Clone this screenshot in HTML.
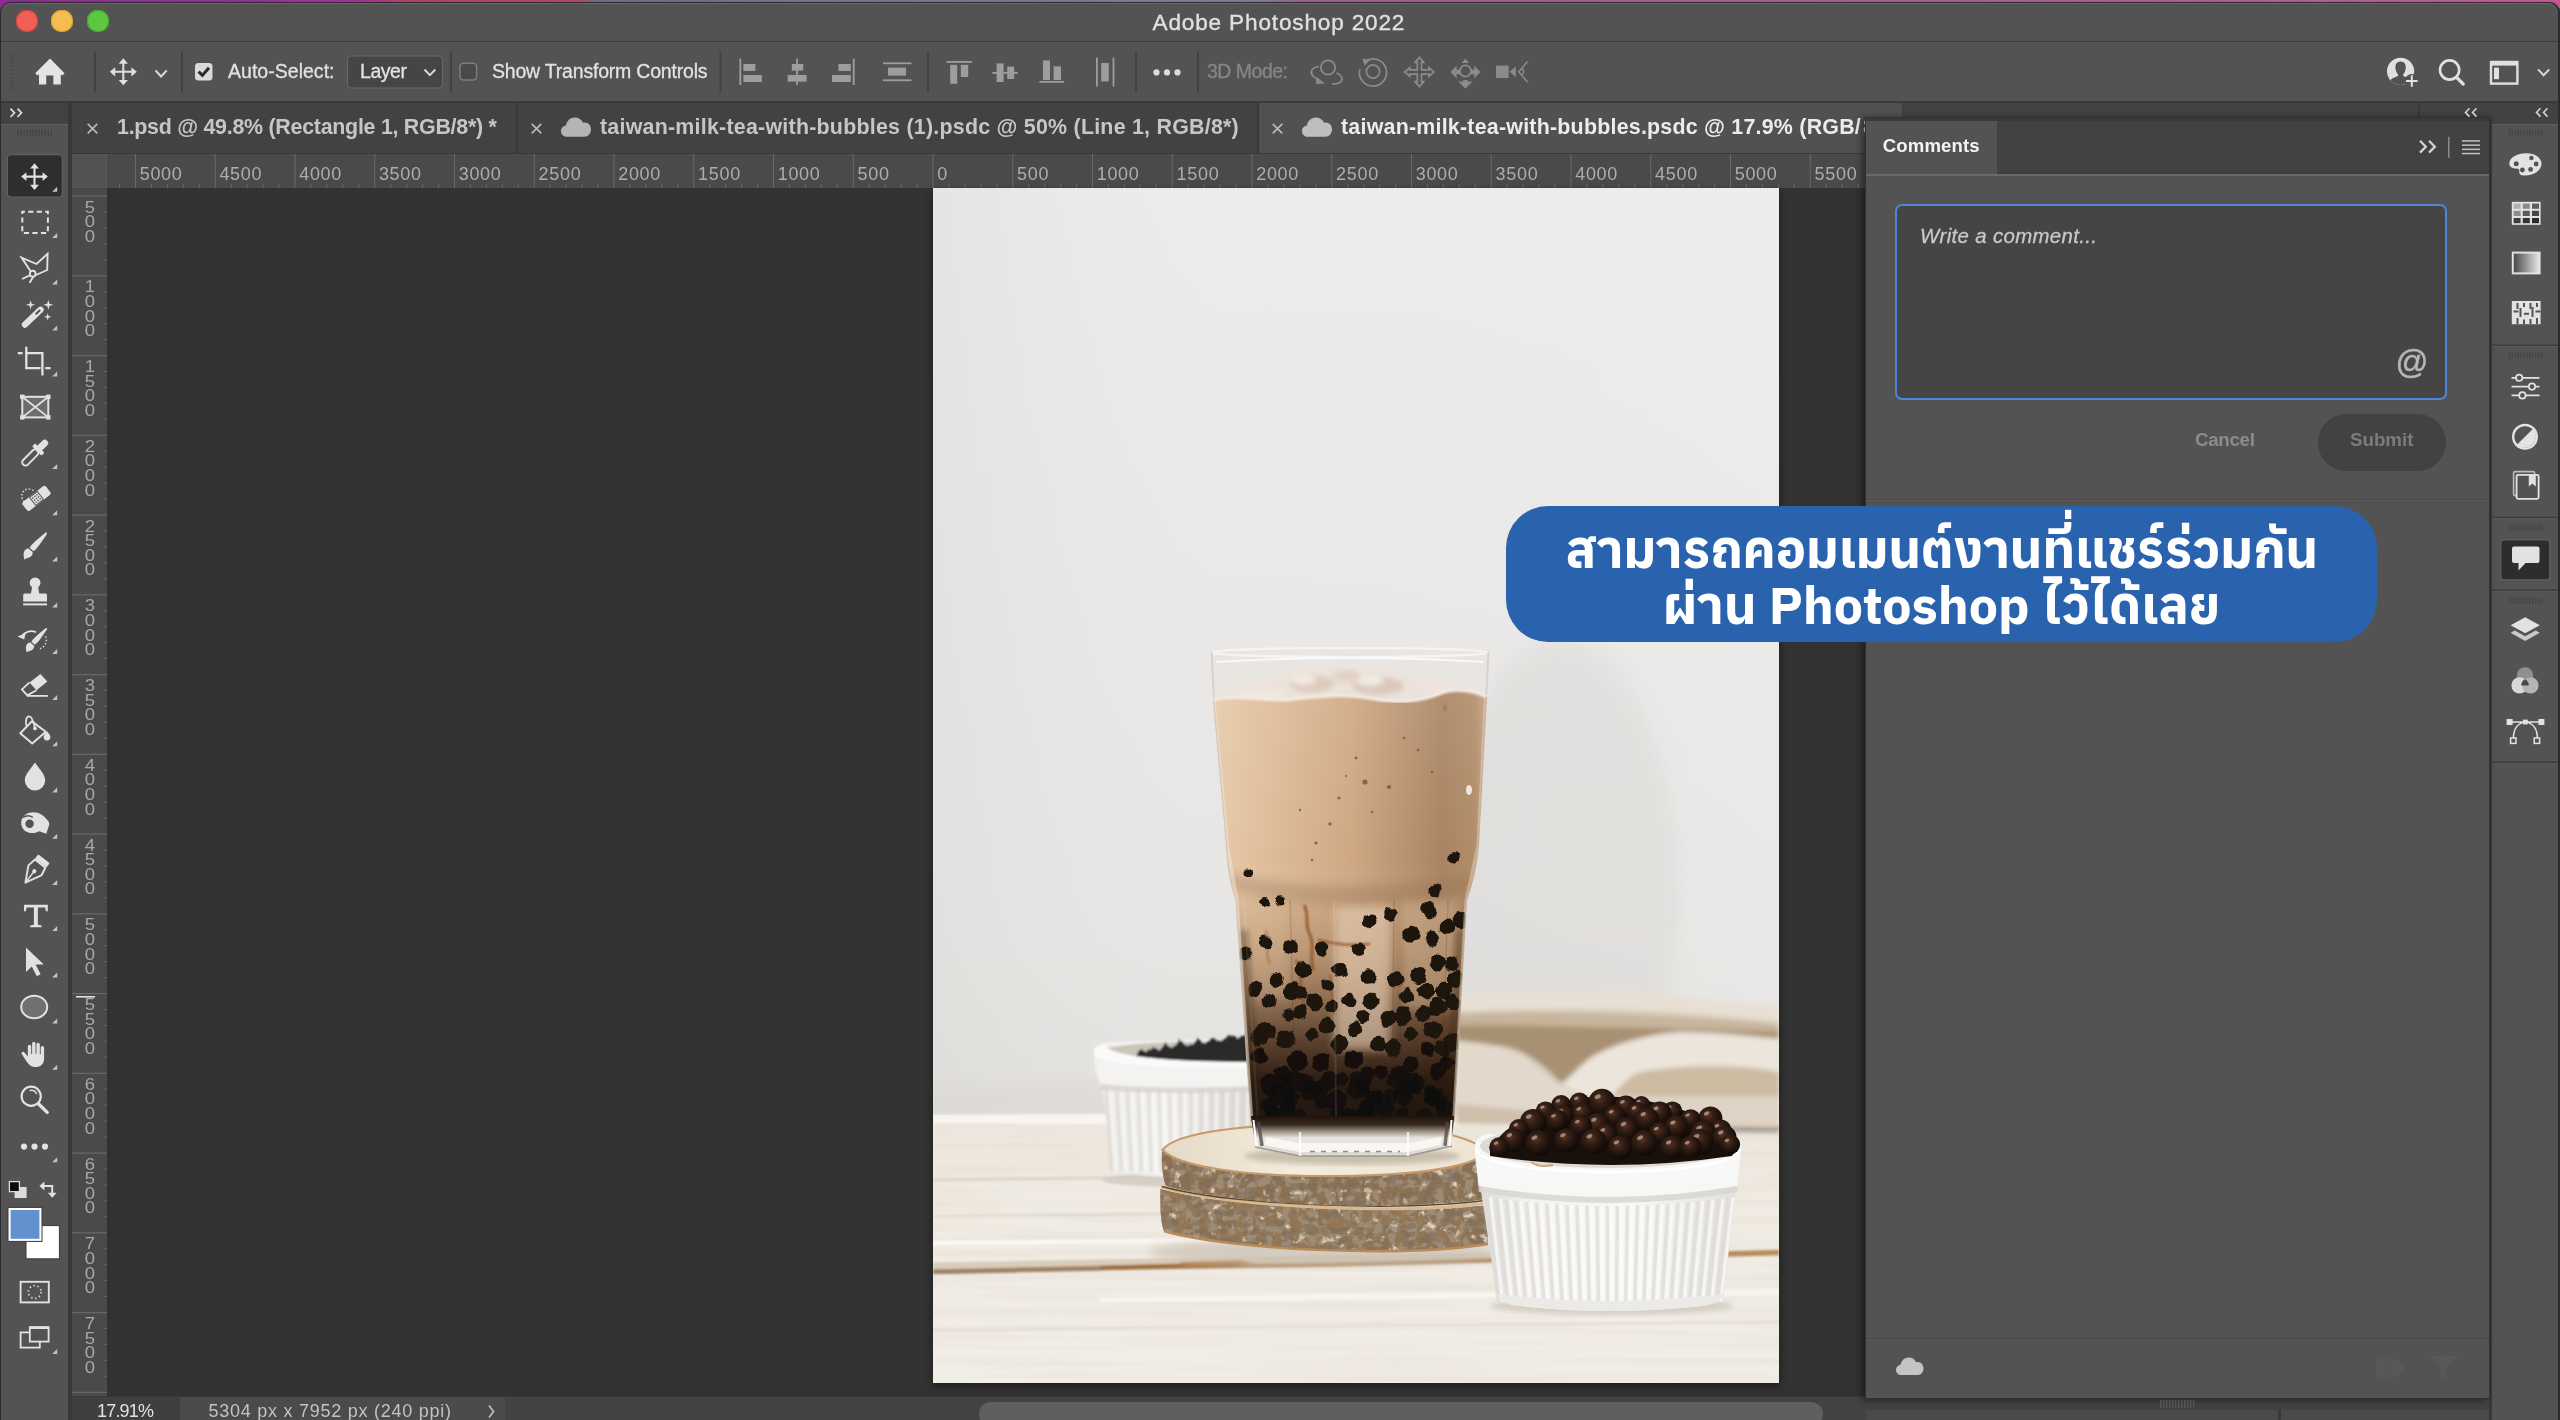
<!DOCTYPE html><html lang="th"><head><meta charset="utf-8"><title>Adobe Photoshop 2022</title><style>
*{box-sizing:border-box;margin:0;padding:0}
html,body{width:2560px;height:1420px;overflow:hidden;background:#535353}
body{position:relative;font-family:"Liberation Sans",sans-serif;color:#d6d6d6}
.a{position:absolute}
.t{position:absolute;white-space:nowrap;line-height:1}
svg{position:absolute;overflow:visible}
</style></head><body><div id="app" style="position:absolute;left:0;top:0;width:2560px;height:1420px;will-change:transform">
<div class="a" style="left:0px;top:0px;width:2560px;height:8px;background:linear-gradient(90deg,#8a2a92 0%,#a0309a 14%,#b8405e 16%,#b04a60 22.500%,#6c6c84 23.500%,#7c7c98 49%,#9a5c88 51%,#a8608c 80%,#c0568e 100%);"></div>
<div class="a" style="left:0px;top:1.5px;width:2560px;height:1419px;background:#2b2b2b;border-radius:11px 11px 0 0"></div>
<div class="a" style="left:1px;top:2.5px;width:2557px;height:39px;background:#535353;border-radius:10px 10px 0 0;box-shadow:inset 0 1px 0 #6a6a6a"></div>
<div class="a" style="left:1px;top:41px;width:2557px;height:1px;background:#3b3b3b;"></div>
<div class="a" style="left:1px;top:42px;width:2557px;height:59px;background:#535353;"></div>
<div class="a" style="left:1px;top:101px;width:2557px;height:2px;background:#3a3a3a;"></div>
<div class="a" style="left:16.4px;top:10.4px;width:21.2px;height:21.2px;border-radius:50%;background:#ee5f57;box-shadow:inset 0 0 0 1px #d0463f"></div>
<div class="a" style="left:51.4px;top:10.4px;width:21.2px;height:21.2px;border-radius:50%;background:#f5bd4f;box-shadow:inset 0 0 0 1px #d8a035"></div>
<div class="a" style="left:87.4px;top:10.4px;width:21.2px;height:21.2px;border-radius:50%;background:#5cc840;box-shadow:inset 0 0 0 1px #46a82e"></div>
<div class="t" style="left:1152.50px;top:12.37px;font-size:22.6px;color:#e0e0e0;letter-spacing:0.829px;-webkit-text-stroke:0.35px #e0e0e0;">Adobe Photoshop 2022</div>
<svg class="a" style="left:0;top:0" width="2560" height="1420" viewBox="0 0 2560 1420"><rect x="10" y="55.0" width="4" height="1.6" fill="#4a4a4a"/><rect x="10" y="58.6" width="4" height="1.6" fill="#4a4a4a"/><rect x="10" y="62.2" width="4" height="1.6" fill="#4a4a4a"/><rect x="10" y="65.8" width="4" height="1.6" fill="#4a4a4a"/><rect x="10" y="69.4" width="4" height="1.6" fill="#4a4a4a"/><rect x="10" y="73.0" width="4" height="1.6" fill="#4a4a4a"/><rect x="10" y="76.6" width="4" height="1.6" fill="#4a4a4a"/><rect x="10" y="80.2" width="4" height="1.6" fill="#4a4a4a"/><rect x="10" y="83.8" width="4" height="1.6" fill="#4a4a4a"/><rect x="10" y="87.4" width="4" height="1.6" fill="#4a4a4a"/><path fill="#e4e4e4" d="M50 58.5 L64.6 73.2 L62.2 75.6 L60.8 74.2 L60.8 84.6 L53.3 84.6 L53.3 75.4 L46.2 75.4 L46.2 84.6 L39 84.6 L39 74.2 L37.6 75.6 L35.2 73.2 Z"/><rect x="94" y="52" width="2" height="40" fill="#424242"/><rect x="181" y="52" width="2" height="40" fill="#424242"/><rect x="450" y="52" width="2" height="40" fill="#424242"/><rect x="719.5" y="52" width="2" height="40" fill="#424242"/><rect x="927" y="52" width="2" height="40" fill="#424242"/><rect x="1135" y="52" width="2" height="40" fill="#424242"/><rect x="1197" y="52" width="2" height="40" fill="#424242"/><path d="M112.8 71.8H133.8M123.3 61.3V82.3" stroke="#e0e0e0" stroke-width="2" fill="none"/><path fill="#e0e0e0" d="M123.3 58.3l4.6 5.3999999999999995h-9.2zM123.3 85.3l4.6 -5.3999999999999995h-9.2zM109.8 71.8l5.3999999999999995 -4.6v9.2zM136.8 71.8l-5.3999999999999995 -4.6v9.2z"/><path d="M155.5 70.5l5.6 6 5.6-6" stroke="#d8d8d8" stroke-width="2" fill="none"/><rect x="195" y="63" width="17.5" height="17.5" rx="3.5" fill="#dadada"/><path d="M198.6 71.6l3.8 3.8 6.6-7.6" stroke="#2a2a2a" stroke-width="3" fill="none"/><rect x="347.5" y="56" width="95" height="32" rx="4" fill="#454545" stroke="#686868" stroke-width="1.2"/><path d="M424.5 69.5l5.4 5.6 5.4-5.6" stroke="#d8d8d8" stroke-width="2" fill="none"/><rect x="460" y="63.3" width="16.6" height="16.6" rx="3.5" fill="#4a4a4a" stroke="#7d7d7d" stroke-width="1.5"/><g fill="#9d9d9d"><rect x="739.4" y="58.6" width="1.8" height="26.4"/><rect x="743.4" y="64" width="12" height="7"/><rect x="743.4" y="75" width="18.4" height="7"/><rect x="796.2" y="58.6" width="1.8" height="26.4"/><rect x="791.8" y="64" width="11.4" height="6.6"/><rect x="787.6" y="75" width="19" height="6.6"/><rect x="852.8" y="58.6" width="1.8" height="26.4"/><rect x="838.4" y="64" width="12.4" height="7"/><rect x="832" y="75" width="18.8" height="7"/><rect x="883" y="62.4" width="28.5" height="1.8"/><rect x="883" y="79.4" width="28.5" height="1.8"/><rect x="888" y="67.6" width="18" height="8"/><rect x="946.5" y="61" width="25.4" height="1.8"/><rect x="950.2" y="64.8" width="7" height="19"/><rect x="960.8" y="64.8" width="7.4" height="12.2"/><rect x="992.4" y="72" width="25.4" height="1.8"/><rect x="996.6" y="63.4" width="7" height="18.6"/><rect x="1007.2" y="66.6" width="7" height="12.4"/><rect x="1039.4" y="81" width="24.8" height="1.8"/><rect x="1043" y="60.4" width="7" height="19.6"/><rect x="1053.6" y="66.4" width="7.4" height="13.6"/><rect x="1096" y="57.6" width="1.8" height="29"/><rect x="1112.6" y="57.6" width="1.8" height="29"/><rect x="1101.2" y="63" width="7.6" height="18.4"/></g><circle cx="1156.5" cy="72.4" r="3.1" fill="#dcdcdc"/><circle cx="1167" cy="72.4" r="3.1" fill="#dcdcdc"/><circle cx="1177.5" cy="72.4" r="3.1" fill="#dcdcdc"/><g stroke="#8b8b8b" stroke-width="1.7" fill="none"><circle cx="1328" cy="67.5" r="7.2"/><path d="M1319 66.5c-7 1-9.5 5-6.5 9 1.5 2 4 3.6 7 4.6M1336.5 73c5 2 7 5.5 4.5 8.5-1.6 1.8-5 2.6-9 2.4"/><path d="M1316.5 77l8.5 6.6-9 .4z" fill="#8b8b8b" stroke="none"/><circle cx="1373" cy="71.5" r="6.6"/><path d="M1365 61.5a13.6 13.6 0 1 1-5.2 7.6"/><path d="M1362.5 58.5l7.6 1.6-5.6 5.6z" fill="#8b8b8b" stroke="none"/><path d="M1421.5 69.9L1421.5 62.4L1423.7 62.4L1419.4 57.4L1415.1 62.4L1417.3 62.4L1417.3 69.9L1417.3 69.9L1409.8 69.9L1409.8 67.7L1404.8 72.0L1409.8 76.3L1409.8 74.1L1417.3 74.1L1417.3 74.1L1417.3 81.6L1415.1 81.6L1419.4 86.6L1423.7 81.6L1421.5 81.6L1421.5 74.1L1421.5 74.1L1429.0 74.1L1429.0 76.3L1434.0 72.0L1429.0 67.7L1429.0 69.9L1421.5 69.9Z"/></g><g fill="#8b8b8b"><path d="M1465.4 58.5l3.6 4.4h-7.2z"/><path d="M1463.2 80h4.4v1.4h4.8l-7 7.4-7-7.4h4.8z"/><path d="M1450.4 72l6.2-6.2v4h3.6v4.4h-3.6v4z"/><path d="M1480.4 72l-6.2-6.2v4h-3.6v4.4h3.6v4z"/><circle cx="1465.4" cy="71" r="5.6" fill="none" stroke="#8b8b8b" stroke-width="1.7"/><rect x="1496" y="65.6" width="12.6" height="12.4"/><path d="M1509.6 71.8l6.2-5.4v10.8z"/><path d="M1527.6 61.4l-8.8 10.4 8.8 10.4M1521.5 68.5c3 1.6 3 5 0 6.6" fill="none" stroke="#8b8b8b" stroke-width="1.5"/></g><circle cx="2400.6" cy="71.3" r="13.6" fill="#e0e0e0"/><path d="M2400.6 61.5c3.6 0 5.4 2.8 5.2 6.2-.2 3-1.4 5.2-2.6 6.6v1.6c3.4 1.2 6.6 2.4 7.6 4.4a13.6 13.6 0 0 1-20.4 0c1-2 4.2-3.2 7.6-4.4v-1.6c-1.2-1.4-2.4-3.6-2.6-6.6-.2-3.4 1.6-6.2 5.2-6.200z" fill="#535353"/><circle cx="2411.8" cy="81" r="7" fill="#535353"/><path d="M2406 81h11.6M2411.8 75.2v11.6" stroke="#e0e0e0" stroke-width="2" fill="none"/><circle cx="2449.6" cy="70" r="9.6" fill="none" stroke="#e0e0e0" stroke-width="2.6"/><path d="M2456.6 77.4l6.6 6.6" stroke="#e0e0e0" stroke-width="3.2" stroke-linecap="round"/><rect x="2491" y="62" width="26.4" height="21.6" fill="none" stroke="#e0e0e0" stroke-width="2.4"/><rect x="2491" y="62" width="26.4" height="3.6" fill="#e0e0e0"/><rect x="2494" y="67.6" width="5" height="11.6" fill="#e0e0e0"/><path d="M2538 69.4l5.6 5.8 5.6-5.800" stroke="#d8d8d8" stroke-width="2" fill="none"/></svg>
<div class="t" style="left:228.00px;top:62.09px;font-size:19.5px;color:#e2e2e2;letter-spacing:0.025px;-webkit-text-stroke:0.3px #e2e2e2;">Auto-Select:</div>
<div class="t" style="left:360.00px;top:62.09px;font-size:19.5px;color:#e2e2e2;letter-spacing:-0.445px;-webkit-text-stroke:0.3px #e2e2e2;">Layer</div>
<div class="t" style="left:492.00px;top:62.09px;font-size:19.5px;color:#e2e2e2;letter-spacing:-0.204px;-webkit-text-stroke:0.3px #e2e2e2;">Show Transform Controls</div>
<div class="t" style="left:1207.00px;top:62.09px;font-size:19.5px;color:#868686;letter-spacing:-0.506px;-webkit-text-stroke:0.3px #868686;">3D Mode:</div>
<div class="a" style="left:1px;top:103px;width:67px;height:21px;background:#424242;"></div>
<div class="a" style="left:1px;top:124px;width:67px;height:1296px;background:#535353;box-shadow:inset 0 1px 0 #5e5e5e"></div>
<div class="a" style="left:68px;top:103px;width:4px;height:1317px;background:#383838;"></div>
<svg class="a" style="left:0;top:0" width="2560" height="1420" viewBox="0 0 2560 1420"><path d="M10.5 108.6l4 4.2-4 4.200M17.5 108.6l4 4.2-4 4.200" stroke="#dcdcdc" stroke-width="1.7" fill="none"/><rect x="17.5" y="129.5" width="1.4" height="7" fill="#454545"/><rect x="20.5" y="129.5" width="1.4" height="7" fill="#454545"/><rect x="23.5" y="129.5" width="1.4" height="7" fill="#454545"/><rect x="26.5" y="129.5" width="1.4" height="7" fill="#454545"/><rect x="29.5" y="129.5" width="1.4" height="7" fill="#454545"/><rect x="32.5" y="129.5" width="1.4" height="7" fill="#454545"/><rect x="35.5" y="129.5" width="1.4" height="7" fill="#454545"/><rect x="38.5" y="129.5" width="1.4" height="7" fill="#454545"/><rect x="41.5" y="129.5" width="1.4" height="7" fill="#454545"/><rect x="44.5" y="129.5" width="1.4" height="7" fill="#454545"/><rect x="47.5" y="129.5" width="1.4" height="7" fill="#454545"/><rect x="50.5" y="129.5" width="1.4" height="7" fill="#454545"/></svg>
<div class="a" style="left:72px;top:103px;width:1830px;height:50px;background:#424242;"></div>
<div class="a" style="left:1259px;top:103px;width:643px;height:50px;background:#515151;"></div>
<div class="a" style="left:516px;top:103px;width:2px;height:50px;background:#383838;"></div>
<div class="a" style="left:1257px;top:103px;width:2px;height:50px;background:#383838;"></div>
<div class="a" style="left:72px;top:153px;width:1830px;height:1px;background:#383838;"></div>
<div class="a" style="left:1902px;top:103px;width:656px;height:15px;background:#424242;"></div>
<svg class="a" style="left:0;top:0" width="2560" height="1420" viewBox="0 0 2560 1420"><path d="M87.7 123.8L97.3 133.4M97.3 123.8L87.7 133.4" stroke="#b8b8b8" stroke-width="1.7" fill="none"/><path d="M531.7 123.8L541.3 133.4M541.3 123.8L531.7 133.4" stroke="#b8b8b8" stroke-width="1.7" fill="none"/><path d="M1272.7 123.8L1282.3 133.4M1282.3 123.8L1272.7 133.4" stroke="#b8b8b8" stroke-width="1.7" fill="none"/><path fill="#b4b4b4" d="M567.20 136.80C563.40 136.80 561.00 134.20 561.00 131.20C561.00 128.20 563.20 126.00 566.00 125.60C566.60 121.00 570.40 117.60 575.00 117.60C578.60 117.60 581.60 119.60 583.00 122.80C583.60 122.60 584.20 122.60 584.80 122.60C588.40 122.60 591.00 125.80 591.00 129.60C591.00 133.60 588.20 136.80 584.40 136.80Z"/><path fill="#bebebe" d="M1308.20 136.80C1304.40 136.80 1302.00 134.20 1302.00 131.20C1302.00 128.20 1304.20 126.00 1307.00 125.60C1307.60 121.00 1311.40 117.60 1316.00 117.60C1319.60 117.60 1322.60 119.60 1324.00 122.80C1324.60 122.60 1325.20 122.60 1325.80 122.60C1329.40 122.60 1332.00 125.80 1332.00 129.60C1332.00 133.60 1329.20 136.80 1325.40 136.80Z"/><rect x="2418" y="103" width="1.5" height="15" fill="#353535"/></svg>
<div class="t" style="left:117.00px;top:117.08px;font-size:21.4px;color:#c6c6c6;letter-spacing:-0.265px;font-weight:700;">1.psd @ 49.8% (Rectangle 1, RGB/8*) *</div>
<div class="t" style="left:600.00px;top:117.08px;font-size:21.4px;color:#c6c6c6;letter-spacing:0.239px;font-weight:700;">taiwan-milk-tea-with-bubbles (1).psdc @ 50% (Line 1, RGB/8*)</div>
<div class="t" style="left:1341.00px;top:117.08px;font-size:21.4px;color:#ececec;letter-spacing:0.227px;font-weight:700;">taiwan-milk-tea-with-bubbles.psdc @ 17.9% (RGB/</div>
<div class="t" style="left:1863.00px;top:117.08px;font-size:21.4px;color:#ececec;letter-spacing:0.000px;font-weight:700;">8*) *</div>
<div class="a" style="left:72px;top:154px;width:1794px;height:34px;background:#4a4a4a;"></div>
<div class="a" style="left:72px;top:188px;width:35px;height:1208px;background:#4a4a4a;"></div>
<div class="a" style="left:107px;top:188px;width:1759px;height:1208px;background:#323232;"></div>
<div class="a" style="left:72px;top:154px;width:35px;height:34px;background:#525252;border-right:1px dotted #5c5c5c;border-bottom:1px dotted #5c5c5c"></div>
<svg class="a" style="left:0;top:0" width="2560" height="1420" viewBox="0 0 2560 1420"><g fill="#686868"><rect x="119.05" y="184" width="1" height="4"/><rect x="135.00" y="154" width="1" height="34"/><rect x="150.95" y="184" width="1" height="4"/><rect x="166.90" y="184" width="1" height="4"/><rect x="182.85" y="184" width="1" height="4"/><rect x="198.80" y="184" width="1" height="4"/><rect x="214.75" y="154" width="1" height="34"/><rect x="230.70" y="184" width="1" height="4"/><rect x="246.65" y="184" width="1" height="4"/><rect x="262.60" y="184" width="1" height="4"/><rect x="278.55" y="184" width="1" height="4"/><rect x="294.50" y="154" width="1" height="34"/><rect x="310.45" y="184" width="1" height="4"/><rect x="326.40" y="184" width="1" height="4"/><rect x="342.35" y="184" width="1" height="4"/><rect x="358.30" y="184" width="1" height="4"/><rect x="374.25" y="154" width="1" height="34"/><rect x="390.20" y="184" width="1" height="4"/><rect x="406.15" y="184" width="1" height="4"/><rect x="422.10" y="184" width="1" height="4"/><rect x="438.05" y="184" width="1" height="4"/><rect x="454.00" y="154" width="1" height="34"/><rect x="469.95" y="184" width="1" height="4"/><rect x="485.90" y="184" width="1" height="4"/><rect x="501.85" y="184" width="1" height="4"/><rect x="517.80" y="184" width="1" height="4"/><rect x="533.75" y="154" width="1" height="34"/><rect x="549.70" y="184" width="1" height="4"/><rect x="565.65" y="184" width="1" height="4"/><rect x="581.60" y="184" width="1" height="4"/><rect x="597.55" y="184" width="1" height="4"/><rect x="613.50" y="154" width="1" height="34"/><rect x="629.45" y="184" width="1" height="4"/><rect x="645.40" y="184" width="1" height="4"/><rect x="661.35" y="184" width="1" height="4"/><rect x="677.30" y="184" width="1" height="4"/><rect x="693.25" y="154" width="1" height="34"/><rect x="709.20" y="184" width="1" height="4"/><rect x="725.15" y="184" width="1" height="4"/><rect x="741.10" y="184" width="1" height="4"/><rect x="757.05" y="184" width="1" height="4"/><rect x="773.00" y="154" width="1" height="34"/><rect x="788.95" y="184" width="1" height="4"/><rect x="804.90" y="184" width="1" height="4"/><rect x="820.85" y="184" width="1" height="4"/><rect x="836.80" y="184" width="1" height="4"/><rect x="852.75" y="154" width="1" height="34"/><rect x="868.70" y="184" width="1" height="4"/><rect x="884.65" y="184" width="1" height="4"/><rect x="900.60" y="184" width="1" height="4"/><rect x="916.55" y="184" width="1" height="4"/><rect x="932.50" y="154" width="1" height="34"/><rect x="948.45" y="184" width="1" height="4"/><rect x="964.40" y="184" width="1" height="4"/><rect x="980.35" y="184" width="1" height="4"/><rect x="996.30" y="184" width="1" height="4"/><rect x="1012.25" y="154" width="1" height="34"/><rect x="1028.20" y="184" width="1" height="4"/><rect x="1044.15" y="184" width="1" height="4"/><rect x="1060.10" y="184" width="1" height="4"/><rect x="1076.05" y="184" width="1" height="4"/><rect x="1092.00" y="154" width="1" height="34"/><rect x="1107.95" y="184" width="1" height="4"/><rect x="1123.90" y="184" width="1" height="4"/><rect x="1139.85" y="184" width="1" height="4"/><rect x="1155.80" y="184" width="1" height="4"/><rect x="1171.75" y="154" width="1" height="34"/><rect x="1187.70" y="184" width="1" height="4"/><rect x="1203.65" y="184" width="1" height="4"/><rect x="1219.60" y="184" width="1" height="4"/><rect x="1235.55" y="184" width="1" height="4"/><rect x="1251.50" y="154" width="1" height="34"/><rect x="1267.45" y="184" width="1" height="4"/><rect x="1283.40" y="184" width="1" height="4"/><rect x="1299.35" y="184" width="1" height="4"/><rect x="1315.30" y="184" width="1" height="4"/><rect x="1331.25" y="154" width="1" height="34"/><rect x="1347.20" y="184" width="1" height="4"/><rect x="1363.15" y="184" width="1" height="4"/><rect x="1379.10" y="184" width="1" height="4"/><rect x="1395.05" y="184" width="1" height="4"/><rect x="1411.00" y="154" width="1" height="34"/><rect x="1426.95" y="184" width="1" height="4"/><rect x="1442.90" y="184" width="1" height="4"/><rect x="1458.85" y="184" width="1" height="4"/><rect x="1474.80" y="184" width="1" height="4"/><rect x="1490.75" y="154" width="1" height="34"/><rect x="1506.70" y="184" width="1" height="4"/><rect x="1522.65" y="184" width="1" height="4"/><rect x="1538.60" y="184" width="1" height="4"/><rect x="1554.55" y="184" width="1" height="4"/><rect x="1570.50" y="154" width="1" height="34"/><rect x="1586.45" y="184" width="1" height="4"/><rect x="1602.40" y="184" width="1" height="4"/><rect x="1618.35" y="184" width="1" height="4"/><rect x="1634.30" y="184" width="1" height="4"/><rect x="1650.25" y="154" width="1" height="34"/><rect x="1666.20" y="184" width="1" height="4"/><rect x="1682.15" y="184" width="1" height="4"/><rect x="1698.10" y="184" width="1" height="4"/><rect x="1714.05" y="184" width="1" height="4"/><rect x="1730.00" y="154" width="1" height="34"/><rect x="1745.95" y="184" width="1" height="4"/><rect x="1761.90" y="184" width="1" height="4"/><rect x="1777.85" y="184" width="1" height="4"/><rect x="1793.80" y="184" width="1" height="4"/><rect x="1809.75" y="154" width="1" height="34"/><rect x="1825.70" y="184" width="1" height="4"/><rect x="1841.65" y="184" width="1" height="4"/><rect x="1857.60" y="184" width="1" height="4"/><rect x="72" y="195.50" width="35" height="1.2"/><rect x="103.5" y="211.45" width="3.5" height="1"/><rect x="103.5" y="227.40" width="3.5" height="1"/><rect x="103.5" y="243.35" width="3.5" height="1"/><rect x="103.5" y="259.30" width="3.5" height="1"/><rect x="72" y="275.25" width="35" height="1.2"/><rect x="103.5" y="291.20" width="3.5" height="1"/><rect x="103.5" y="307.15" width="3.5" height="1"/><rect x="103.5" y="323.10" width="3.5" height="1"/><rect x="103.5" y="339.05" width="3.5" height="1"/><rect x="72" y="355.00" width="35" height="1.2"/><rect x="103.5" y="370.95" width="3.5" height="1"/><rect x="103.5" y="386.90" width="3.5" height="1"/><rect x="103.5" y="402.85" width="3.5" height="1"/><rect x="103.5" y="418.80" width="3.5" height="1"/><rect x="72" y="434.75" width="35" height="1.2"/><rect x="103.5" y="450.70" width="3.5" height="1"/><rect x="103.5" y="466.65" width="3.5" height="1"/><rect x="103.5" y="482.60" width="3.5" height="1"/><rect x="103.5" y="498.55" width="3.5" height="1"/><rect x="72" y="514.50" width="35" height="1.2"/><rect x="103.5" y="530.45" width="3.5" height="1"/><rect x="103.5" y="546.40" width="3.5" height="1"/><rect x="103.5" y="562.35" width="3.5" height="1"/><rect x="103.5" y="578.30" width="3.5" height="1"/><rect x="72" y="594.25" width="35" height="1.2"/><rect x="103.5" y="610.20" width="3.5" height="1"/><rect x="103.5" y="626.15" width="3.5" height="1"/><rect x="103.5" y="642.10" width="3.5" height="1"/><rect x="103.5" y="658.05" width="3.5" height="1"/><rect x="72" y="674.00" width="35" height="1.2"/><rect x="103.5" y="689.95" width="3.5" height="1"/><rect x="103.5" y="705.90" width="3.5" height="1"/><rect x="103.5" y="721.85" width="3.5" height="1"/><rect x="103.5" y="737.80" width="3.5" height="1"/><rect x="72" y="753.75" width="35" height="1.2"/><rect x="103.5" y="769.70" width="3.5" height="1"/><rect x="103.5" y="785.65" width="3.5" height="1"/><rect x="103.5" y="801.60" width="3.5" height="1"/><rect x="103.5" y="817.55" width="3.5" height="1"/><rect x="72" y="833.50" width="35" height="1.2"/><rect x="103.5" y="849.45" width="3.5" height="1"/><rect x="103.5" y="865.40" width="3.5" height="1"/><rect x="103.5" y="881.35" width="3.5" height="1"/><rect x="103.5" y="897.30" width="3.5" height="1"/><rect x="72" y="913.25" width="35" height="1.2"/><rect x="103.5" y="929.20" width="3.5" height="1"/><rect x="103.5" y="945.15" width="3.5" height="1"/><rect x="103.5" y="961.10" width="3.5" height="1"/><rect x="103.5" y="977.05" width="3.5" height="1"/><rect x="72" y="993.00" width="35" height="1.2"/><rect x="103.5" y="1008.95" width="3.5" height="1"/><rect x="103.5" y="1024.90" width="3.5" height="1"/><rect x="103.5" y="1040.85" width="3.5" height="1"/><rect x="103.5" y="1056.80" width="3.5" height="1"/><rect x="72" y="1072.75" width="35" height="1.2"/><rect x="103.5" y="1088.70" width="3.5" height="1"/><rect x="103.5" y="1104.65" width="3.5" height="1"/><rect x="103.5" y="1120.60" width="3.5" height="1"/><rect x="103.5" y="1136.55" width="3.5" height="1"/><rect x="72" y="1152.50" width="35" height="1.2"/><rect x="103.5" y="1168.45" width="3.5" height="1"/><rect x="103.5" y="1184.40" width="3.5" height="1"/><rect x="103.5" y="1200.35" width="3.5" height="1"/><rect x="103.5" y="1216.30" width="3.5" height="1"/><rect x="72" y="1232.25" width="35" height="1.2"/><rect x="103.5" y="1248.20" width="3.5" height="1"/><rect x="103.5" y="1264.15" width="3.5" height="1"/><rect x="103.5" y="1280.10" width="3.5" height="1"/><rect x="103.5" y="1296.05" width="3.5" height="1"/><rect x="72" y="1312.00" width="35" height="1.2"/><rect x="103.5" y="1327.95" width="3.5" height="1"/><rect x="103.5" y="1343.90" width="3.5" height="1"/><rect x="103.5" y="1359.85" width="3.5" height="1"/><rect x="103.5" y="1375.80" width="3.5" height="1"/><rect x="72" y="1391.75" width="35" height="1.2"/></g><rect x="76" y="996" width="19" height="1.6" fill="#e0e0e0"/></svg>
<div class="t" style="left:139.7px;top:164.8px;font-size:18px;color:#adadad;letter-spacing:0.7px">5000</div>
<div class="t" style="left:219.4px;top:164.8px;font-size:18px;color:#adadad;letter-spacing:0.7px">4500</div>
<div class="t" style="left:299.2px;top:164.8px;font-size:18px;color:#adadad;letter-spacing:0.7px">4000</div>
<div class="t" style="left:378.9px;top:164.8px;font-size:18px;color:#adadad;letter-spacing:0.7px">3500</div>
<div class="t" style="left:458.7px;top:164.8px;font-size:18px;color:#adadad;letter-spacing:0.7px">3000</div>
<div class="t" style="left:538.5px;top:164.8px;font-size:18px;color:#adadad;letter-spacing:0.7px">2500</div>
<div class="t" style="left:618.2px;top:164.8px;font-size:18px;color:#adadad;letter-spacing:0.7px">2000</div>
<div class="t" style="left:698.0px;top:164.8px;font-size:18px;color:#adadad;letter-spacing:0.7px">1500</div>
<div class="t" style="left:777.7px;top:164.8px;font-size:18px;color:#adadad;letter-spacing:0.7px">1000</div>
<div class="t" style="left:857.5px;top:164.8px;font-size:18px;color:#adadad;letter-spacing:0.7px">500</div>
<div class="t" style="left:937.2px;top:164.8px;font-size:18px;color:#adadad;letter-spacing:0.7px">0</div>
<div class="t" style="left:1017.0px;top:164.8px;font-size:18px;color:#adadad;letter-spacing:0.7px">500</div>
<div class="t" style="left:1096.7px;top:164.8px;font-size:18px;color:#adadad;letter-spacing:0.7px">1000</div>
<div class="t" style="left:1176.5px;top:164.8px;font-size:18px;color:#adadad;letter-spacing:0.7px">1500</div>
<div class="t" style="left:1256.2px;top:164.8px;font-size:18px;color:#adadad;letter-spacing:0.7px">2000</div>
<div class="t" style="left:1336.0px;top:164.8px;font-size:18px;color:#adadad;letter-spacing:0.7px">2500</div>
<div class="t" style="left:1415.7px;top:164.8px;font-size:18px;color:#adadad;letter-spacing:0.7px">3000</div>
<div class="t" style="left:1495.5px;top:164.8px;font-size:18px;color:#adadad;letter-spacing:0.7px">3500</div>
<div class="t" style="left:1575.2px;top:164.8px;font-size:18px;color:#adadad;letter-spacing:0.7px">4000</div>
<div class="t" style="left:1655.0px;top:164.8px;font-size:18px;color:#adadad;letter-spacing:0.7px">4500</div>
<div class="t" style="left:1734.7px;top:164.8px;font-size:18px;color:#adadad;letter-spacing:0.7px">5000</div>
<div class="t" style="left:1814.5px;top:164.8px;font-size:18px;color:#adadad;letter-spacing:0.7px">5500</div>
<div class="a" style="left:72px;top:188px;width:35px;height:1208px;overflow:hidden">
<div class="t" style="left:12px;width:12px;text-align:center;top:10.5px;font-size:16.4px;color:#a8a8a8;transform:scaleX(1.13)">5</div>
<div class="t" style="left:12px;width:12px;text-align:center;top:25.1px;font-size:16.4px;color:#a8a8a8;transform:scaleX(1.13)">0</div>
<div class="t" style="left:12px;width:12px;text-align:center;top:39.7px;font-size:16.4px;color:#a8a8a8;transform:scaleX(1.13)">0</div>
<div class="t" style="left:12px;width:12px;text-align:center;top:90.3px;font-size:16.4px;color:#a8a8a8;transform:scaleX(1.13)">1</div>
<div class="t" style="left:12px;width:12px;text-align:center;top:104.9px;font-size:16.4px;color:#a8a8a8;transform:scaleX(1.13)">0</div>
<div class="t" style="left:12px;width:12px;text-align:center;top:119.5px;font-size:16.4px;color:#a8a8a8;transform:scaleX(1.13)">0</div>
<div class="t" style="left:12px;width:12px;text-align:center;top:134.1px;font-size:16.4px;color:#a8a8a8;transform:scaleX(1.13)">0</div>
<div class="t" style="left:12px;width:12px;text-align:center;top:170.0px;font-size:16.4px;color:#a8a8a8;transform:scaleX(1.13)">1</div>
<div class="t" style="left:12px;width:12px;text-align:center;top:184.6px;font-size:16.4px;color:#a8a8a8;transform:scaleX(1.13)">5</div>
<div class="t" style="left:12px;width:12px;text-align:center;top:199.2px;font-size:16.4px;color:#a8a8a8;transform:scaleX(1.13)">0</div>
<div class="t" style="left:12px;width:12px;text-align:center;top:213.8px;font-size:16.4px;color:#a8a8a8;transform:scaleX(1.13)">0</div>
<div class="t" style="left:12px;width:12px;text-align:center;top:249.8px;font-size:16.4px;color:#a8a8a8;transform:scaleX(1.13)">2</div>
<div class="t" style="left:12px;width:12px;text-align:center;top:264.4px;font-size:16.4px;color:#a8a8a8;transform:scaleX(1.13)">0</div>
<div class="t" style="left:12px;width:12px;text-align:center;top:279.0px;font-size:16.4px;color:#a8a8a8;transform:scaleX(1.13)">0</div>
<div class="t" style="left:12px;width:12px;text-align:center;top:293.6px;font-size:16.4px;color:#a8a8a8;transform:scaleX(1.13)">0</div>
<div class="t" style="left:12px;width:12px;text-align:center;top:329.5px;font-size:16.4px;color:#a8a8a8;transform:scaleX(1.13)">2</div>
<div class="t" style="left:12px;width:12px;text-align:center;top:344.1px;font-size:16.4px;color:#a8a8a8;transform:scaleX(1.13)">5</div>
<div class="t" style="left:12px;width:12px;text-align:center;top:358.7px;font-size:16.4px;color:#a8a8a8;transform:scaleX(1.13)">0</div>
<div class="t" style="left:12px;width:12px;text-align:center;top:373.3px;font-size:16.4px;color:#a8a8a8;transform:scaleX(1.13)">0</div>
<div class="t" style="left:12px;width:12px;text-align:center;top:409.3px;font-size:16.4px;color:#a8a8a8;transform:scaleX(1.13)">3</div>
<div class="t" style="left:12px;width:12px;text-align:center;top:423.9px;font-size:16.4px;color:#a8a8a8;transform:scaleX(1.13)">0</div>
<div class="t" style="left:12px;width:12px;text-align:center;top:438.5px;font-size:16.4px;color:#a8a8a8;transform:scaleX(1.13)">0</div>
<div class="t" style="left:12px;width:12px;text-align:center;top:453.1px;font-size:16.4px;color:#a8a8a8;transform:scaleX(1.13)">0</div>
<div class="t" style="left:12px;width:12px;text-align:center;top:489.0px;font-size:16.4px;color:#a8a8a8;transform:scaleX(1.13)">3</div>
<div class="t" style="left:12px;width:12px;text-align:center;top:503.6px;font-size:16.4px;color:#a8a8a8;transform:scaleX(1.13)">5</div>
<div class="t" style="left:12px;width:12px;text-align:center;top:518.2px;font-size:16.4px;color:#a8a8a8;transform:scaleX(1.13)">0</div>
<div class="t" style="left:12px;width:12px;text-align:center;top:532.8px;font-size:16.4px;color:#a8a8a8;transform:scaleX(1.13)">0</div>
<div class="t" style="left:12px;width:12px;text-align:center;top:568.8px;font-size:16.4px;color:#a8a8a8;transform:scaleX(1.13)">4</div>
<div class="t" style="left:12px;width:12px;text-align:center;top:583.4px;font-size:16.4px;color:#a8a8a8;transform:scaleX(1.13)">0</div>
<div class="t" style="left:12px;width:12px;text-align:center;top:598.0px;font-size:16.4px;color:#a8a8a8;transform:scaleX(1.13)">0</div>
<div class="t" style="left:12px;width:12px;text-align:center;top:612.6px;font-size:16.4px;color:#a8a8a8;transform:scaleX(1.13)">0</div>
<div class="t" style="left:12px;width:12px;text-align:center;top:648.5px;font-size:16.4px;color:#a8a8a8;transform:scaleX(1.13)">4</div>
<div class="t" style="left:12px;width:12px;text-align:center;top:663.1px;font-size:16.4px;color:#a8a8a8;transform:scaleX(1.13)">5</div>
<div class="t" style="left:12px;width:12px;text-align:center;top:677.7px;font-size:16.4px;color:#a8a8a8;transform:scaleX(1.13)">0</div>
<div class="t" style="left:12px;width:12px;text-align:center;top:692.3px;font-size:16.4px;color:#a8a8a8;transform:scaleX(1.13)">0</div>
<div class="t" style="left:12px;width:12px;text-align:center;top:728.3px;font-size:16.4px;color:#a8a8a8;transform:scaleX(1.13)">5</div>
<div class="t" style="left:12px;width:12px;text-align:center;top:742.9px;font-size:16.4px;color:#a8a8a8;transform:scaleX(1.13)">0</div>
<div class="t" style="left:12px;width:12px;text-align:center;top:757.5px;font-size:16.4px;color:#a8a8a8;transform:scaleX(1.13)">0</div>
<div class="t" style="left:12px;width:12px;text-align:center;top:772.1px;font-size:16.4px;color:#a8a8a8;transform:scaleX(1.13)">0</div>
<div class="t" style="left:12px;width:12px;text-align:center;top:808.0px;font-size:16.4px;color:#a8a8a8;transform:scaleX(1.13)">5</div>
<div class="t" style="left:12px;width:12px;text-align:center;top:822.6px;font-size:16.4px;color:#a8a8a8;transform:scaleX(1.13)">5</div>
<div class="t" style="left:12px;width:12px;text-align:center;top:837.2px;font-size:16.4px;color:#a8a8a8;transform:scaleX(1.13)">0</div>
<div class="t" style="left:12px;width:12px;text-align:center;top:851.8px;font-size:16.4px;color:#a8a8a8;transform:scaleX(1.13)">0</div>
<div class="t" style="left:12px;width:12px;text-align:center;top:887.8px;font-size:16.4px;color:#a8a8a8;transform:scaleX(1.13)">6</div>
<div class="t" style="left:12px;width:12px;text-align:center;top:902.4px;font-size:16.4px;color:#a8a8a8;transform:scaleX(1.13)">0</div>
<div class="t" style="left:12px;width:12px;text-align:center;top:917.0px;font-size:16.4px;color:#a8a8a8;transform:scaleX(1.13)">0</div>
<div class="t" style="left:12px;width:12px;text-align:center;top:931.6px;font-size:16.4px;color:#a8a8a8;transform:scaleX(1.13)">0</div>
<div class="t" style="left:12px;width:12px;text-align:center;top:967.5px;font-size:16.4px;color:#a8a8a8;transform:scaleX(1.13)">6</div>
<div class="t" style="left:12px;width:12px;text-align:center;top:982.1px;font-size:16.4px;color:#a8a8a8;transform:scaleX(1.13)">5</div>
<div class="t" style="left:12px;width:12px;text-align:center;top:996.7px;font-size:16.4px;color:#a8a8a8;transform:scaleX(1.13)">0</div>
<div class="t" style="left:12px;width:12px;text-align:center;top:1011.3px;font-size:16.4px;color:#a8a8a8;transform:scaleX(1.13)">0</div>
<div class="t" style="left:12px;width:12px;text-align:center;top:1047.3px;font-size:16.4px;color:#a8a8a8;transform:scaleX(1.13)">7</div>
<div class="t" style="left:12px;width:12px;text-align:center;top:1061.9px;font-size:16.4px;color:#a8a8a8;transform:scaleX(1.13)">0</div>
<div class="t" style="left:12px;width:12px;text-align:center;top:1076.5px;font-size:16.4px;color:#a8a8a8;transform:scaleX(1.13)">0</div>
<div class="t" style="left:12px;width:12px;text-align:center;top:1091.1px;font-size:16.4px;color:#a8a8a8;transform:scaleX(1.13)">0</div>
<div class="t" style="left:12px;width:12px;text-align:center;top:1127.0px;font-size:16.4px;color:#a8a8a8;transform:scaleX(1.13)">7</div>
<div class="t" style="left:12px;width:12px;text-align:center;top:1141.6px;font-size:16.4px;color:#a8a8a8;transform:scaleX(1.13)">5</div>
<div class="t" style="left:12px;width:12px;text-align:center;top:1156.2px;font-size:16.4px;color:#a8a8a8;transform:scaleX(1.13)">0</div>
<div class="t" style="left:12px;width:12px;text-align:center;top:1170.8px;font-size:16.4px;color:#a8a8a8;transform:scaleX(1.13)">0</div>
<div class="t" style="left:12px;width:12px;text-align:center;top:1206.8px;font-size:16.4px;color:#a8a8a8;transform:scaleX(1.13)">8</div>
<div class="t" style="left:12px;width:12px;text-align:center;top:1221.4px;font-size:16.4px;color:#a8a8a8;transform:scaleX(1.13)">0</div>
<div class="t" style="left:12px;width:12px;text-align:center;top:1236.0px;font-size:16.4px;color:#a8a8a8;transform:scaleX(1.13)">0</div>
<div class="t" style="left:12px;width:12px;text-align:center;top:1250.6px;font-size:16.4px;color:#a8a8a8;transform:scaleX(1.13)">0</div>
</div>
<div class="a" style="left:72px;top:1396px;width:1794px;height:24px;background:#424242;border-top:1px solid #383838"></div>
<div class="a" style="left:72px;top:1397px;width:108px;height:23px;background:#3f3f3f;"></div>
<div class="a" style="left:180px;top:1397px;width:325px;height:23px;background:#4b4b4b;"></div>
<div class="a" style="left:979px;top:1402px;width:844px;height:24px;background:#5f5f5f;border-radius:12px"></div>
<div class="t" style="left:97.00px;top:1402.26px;font-size:18px;color:#e2e2e2;letter-spacing:-0.810px;">17.91%</div>
<div class="t" style="left:208.50px;top:1402.26px;font-size:18px;color:#c2c2c2;letter-spacing:0.744px;">5304 px x 7952 px (240 ppi)</div>
<svg class="a" style="left:0;top:0" width="2560" height="1420" viewBox="0 0 2560 1420"><path d="M489 1405.500l4.600 6-4.600 6" stroke="#c8c8c8" stroke-width="1.5" fill="none"/></svg>
<div class="a" style="left:933px;top:188px;width:846px;height:1195px;background:#e9e8e6;box-shadow:0 3px 8px rgba(0,0,0,.45)"></div>
<svg class="a" style="left:0;top:0" width="2560" height="1420" viewBox="0 0 2560 1420"><defs>
<clipPath id="pc"><rect x="933" y="188" width="846" height="1195"/></clipPath>
<linearGradient id="wall" x1="0" y1="0" x2="0" y2="1"><stop offset="0" stop-color="#ececec"/><stop offset=".55" stop-color="#e9e8e7"/><stop offset=".8" stop-color="#e7e6e4"/><stop offset="1" stop-color="#e3e1de"/></linearGradient>
<linearGradient id="wallx" x1="0" y1="0" x2="1" y2="0"><stop offset="0" stop-color="#d8d6d4" stop-opacity=".35"/><stop offset=".35" stop-color="#e8e8e8" stop-opacity="0"/><stop offset="1" stop-color="#f0f0f0" stop-opacity=".25"/></linearGradient>
<linearGradient id="table" x1="0" y1="0" x2="0" y2="1"><stop offset="0" stop-color="#ece6dd"/><stop offset=".35" stop-color="#f0ebe3"/><stop offset="1" stop-color="#f1ede7"/></linearGradient>
<linearGradient id="milk" x1="0" y1="0" x2="1" y2="0"><stop offset="0" stop-color="#e6ccb0"/><stop offset=".12" stop-color="#e3c4a2"/><stop offset=".5" stop-color="#cfa883"/><stop offset=".82" stop-color="#a98462"/><stop offset=".93" stop-color="#b08d6a"/><stop offset="1" stop-color="#d3b595"/></linearGradient>
<linearGradient id="milkv" x1="0" y1="0" x2="0" y2="1"><stop offset="0" stop-color="#fff" stop-opacity=".1"/><stop offset=".4" stop-color="#fff" stop-opacity="0"/><stop offset=".5" stop-color="#8a6444" stop-opacity=".1"/><stop offset=".6" stop-color="#7a5638" stop-opacity=".3"/><stop offset=".7" stop-color="#5e3e26" stop-opacity=".55"/><stop offset=".8" stop-color="#3e2616" stop-opacity=".8"/><stop offset=".89" stop-color="#24160e" stop-opacity=".95"/><stop offset="1" stop-color="#1c110b" stop-opacity=".98"/></linearGradient>
<linearGradient id="gbase" x1="0" y1="0" x2="1" y2="0"><stop offset="0" stop-color="#f4f4f2"/><stop offset=".08" stop-color="#9a9894"/><stop offset=".16" stop-color="#e8e7e4"/><stop offset=".3" stop-color="#c9c7c2"/><stop offset=".5" stop-color="#efeeeb"/><stop offset=".7" stop-color="#d2d0cb"/><stop offset=".86" stop-color="#f6f6f4"/><stop offset=".93" stop-color="#8e8c88"/><stop offset="1" stop-color="#e6e5e2"/></linearGradient>
<linearGradient id="ram" x1="0" y1="0" x2="1" y2="0"><stop offset="0" stop-color="#dddbd7"/><stop offset=".2" stop-color="#f3f2f0"/><stop offset=".6" stop-color="#f7f7f6"/><stop offset="1" stop-color="#e2e0dc"/></linearGradient>
<linearGradient id="ramL" x1="0" y1="0" x2="1" y2="0"><stop offset="0" stop-color="#ebeae7"/><stop offset=".4" stop-color="#f4f3f1"/><stop offset="1" stop-color="#d9d5cf"/></linearGradient>
<linearGradient id="cloth" x1="0" y1="0" x2="0" y2="1"><stop offset="0" stop-color="#e2d9cb"/><stop offset=".35" stop-color="#d6cab8"/><stop offset="1" stop-color="#cfc2af"/></linearGradient>
<linearGradient id="cloth2" x1="0" y1="0" x2="0" y2="1"><stop offset="0" stop-color="#e6ddd0"/><stop offset=".6" stop-color="#dbd0bf"/><stop offset="1" stop-color="#cdbfab"/></linearGradient>
<linearGradient id="face" x1="0" y1="0" x2="1" y2="0"><stop offset="0" stop-color="#e6dac6"/><stop offset=".4" stop-color="#f2ebde"/><stop offset="1" stop-color="#ede4d4"/></linearGradient>
<radialGradient id="pearl" cx=".4" cy=".35" r=".7"><stop offset="0" stop-color="#5c3422"/><stop offset=".3" stop-color="#382016"/><stop offset=".7" stop-color="#1c110c"/><stop offset="1" stop-color="#0c0705"/></radialGradient>
<filter id="b1" x="-10%" y="-10%" width="120%" height="120%"><feGaussianBlur stdDeviation="1.2"/></filter>
<filter id="b2" x="-10%" y="-10%" width="120%" height="120%"><feGaussianBlur stdDeviation="2.5"/></filter>
<filter id="b4" x="-20%" y="-20%" width="140%" height="140%"><feGaussianBlur stdDeviation="5"/></filter>
<filter id="b8" x="-30%" y="-30%" width="160%" height="160%"><feGaussianBlur stdDeviation="10"/></filter>
<filter id="bark" x="0" y="0" width="100%" height="100%"><feTurbulence type="fractalNoise" baseFrequency=".11 .09" numOctaves="3" seed="4" result="n"/><feColorMatrix in="n" type="matrix" values="0 0 0 0 .34  0 0 0 0 .26  0 0 0 0 .18  7 0 0 0 -3.2" result="d"/><feComposite in="d" in2="SourceGraphic" operator="in" result="dd"/><feColorMatrix in="n" type="matrix" values="0 0 0 0 .74  0 0 0 0 .64  0 0 0 0 .49  0 6 0 0 -3.75" result="l"/><feComposite in="l" in2="SourceGraphic" operator="in" result="ll"/><feMerge><feMergeNode in="SourceGraphic"/><feMergeNode in="dd"/><feMergeNode in="ll"/></feMerge></filter>
<filter id="bark2" x="0" y="0" width="100%" height="100%"><feTurbulence type="turbulence" baseFrequency=".05 .11" numOctaves="2" seed="9" result="n"/><feColorMatrix in="n" type="matrix" values="0 0 0 0 .2  0 0 0 0 .15  0 0 0 0 .1  0 0 9 0 -2.4" result="d"/><feComposite in="d" in2="SourceGraphic" operator="in" result="dd"/><feMerge><feMergeNode in="dd"/></feMerge></filter>
<filter id="grain" x="0" y="0" width="100%" height="100%"><feTurbulence type="fractalNoise" baseFrequency=".004 .12" numOctaves="2" seed="3" result="n"/><feColorMatrix in="n" type="matrix" values="0 0 0 0 .80  0 0 0 0 .74  0 0 0 0 .66  0 1.5 0 0 -.62" result="d"/><feComposite in="d" in2="SourceGraphic" operator="in" result="dd"/><feMerge><feMergeNode in="SourceGraphic"/><feMergeNode in="dd"/></feMerge></filter>
</defs><g clip-path="url(#pc)"><rect x="933" y="188" width="846" height="935" fill="url(#wall)"/><rect x="933" y="188" width="846" height="935" fill="url(#wallx)"/><ellipse cx="1560" cy="900" rx="120" ry="260" fill="#d5d2ce" opacity=".35" filter="url(#b8)"/><rect x="933" y="1085" width="846" height="34" fill="#d6d2cd" opacity=".4" filter="url(#b8)"/><g filter="url(#grain)"><path d="M933 1115L1300 1113 1779 1120V1383H933z" fill="url(#table)"/></g><path d="M933 1115L1300 1113 1779 1120V1128L933 1123z" fill="#fbf9f5" opacity=".8" filter="url(#b1)"/><g filter="url(#b1)"><path d="M933 1180L1165 1177" stroke="#d9d2c7" stroke-width="2.500"/><path d="M933 1216L1170 1214" stroke="#ddd6cb" stroke-width="2"/><path d="M933 1243L1240 1240" stroke="#faf8f4" stroke-width="4"/><path d="M933 1266L1100 1263 1500 1256" stroke="#d9ccb9" stroke-width="7" fill="none"/><path d="M933 1271.500L1100 1268 1330 1264.500 1500 1260" stroke="#b08c64" stroke-width="4.500" fill="none"/><path d="M933 1272L1100 1268.500" stroke="#9c8468" stroke-width="4.500" fill="none"/><path d="M1100 1268L1240 1264" stroke="#a0703f" stroke-width="4.500"/><path d="M1180 1262l60-2 14 3-70 4z" fill="#b37b48"/><path d="M1726 1254L1779 1252.500" stroke="#b98c5c" stroke-width="5.500"/><path d="M1740 1127.500l39-.5" stroke="#8f8a84" stroke-width="2.500"/><path d="M933 1330L1779 1322" stroke="#e5ded4" stroke-width="3"/><path d="M1100 1300L1779 1292" stroke="#f8f5f0" stroke-width="5"/></g><g filter="url(#b2)"><path d="M1456 996C1470 991 1520 992 1609 990C1640 990 1670 995 1694 999L1779 1006V1132L1456 1124z" fill="#d9cdbb"/><path d="M1456 996C1470 991 1520 992 1609 990C1640 990 1670 995 1694 999L1779 1006V1022C1700 1012 1600 1004 1456 1012z" fill="#e8e0d4"/><path d="M1456 1022C1500 1020 1560 1026 1640 1026L1779 1030V1042L1680 1032C1640 1040 1600 1052 1590 1062C1580 1074 1572 1082 1560 1082C1548 1070 1530 1050 1500 1046L1456 1040z" fill="#a89072"/><path d="M1456 1014C1520 1010 1600 1012 1700 1018L1779 1024V1032L1640 1028C1560 1028 1500 1024 1456 1026z" fill="#c4b299" opacity=".9"/><path d="M1456 1042C1480 1042 1500 1046 1512 1050C1530 1058 1546 1076 1558 1084C1570 1090 1580 1092 1600 1096L1600 1126 1456 1122z" fill="#e2d9cc"/><path d="M1456 1104L1540 1112 1600 1126 1456 1124z" fill="#cdbfaa"/><path d="M1562 1084C1575 1072 1585 1060 1597 1054C1620 1042 1650 1034 1680 1032C1720 1032 1750 1036 1779 1039V1096L1600 1096C1585 1094 1572 1090 1562 1084z" fill="#ebe5db"/><path d="M1640 1072C1700 1062 1750 1066 1779 1072V1100L1610 1098C1620 1086 1630 1076 1640 1072z" fill="#c9b59a" opacity=".9"/><path d="M1600 1096L1779 1096V1130L1600 1126z" fill="#ded3c4"/><path d="M1690 1127L1779 1128.500v3l-90-1z" fill="#4a453e" opacity=".8"/></g><g filter="url(#b1)"><ellipse cx="1182" cy="1180" rx="80" ry="7" fill="#cfc9c0" opacity=".8"/><path d="M1100 1080L1116 1172Q1180 1182 1262 1174L1262 1080z" fill="url(#ramL)"/><path d="M1106.0 1088L1111.6 1172" stroke="#d8d4ce" stroke-width="3.600" opacity=".55"/><path d="M1110.5 1088L1116.1 1172" stroke="#fbfbfa" stroke-width="3" opacity=".6"/><path d="M1116.6 1088L1121.5 1172" stroke="#d8d4ce" stroke-width="3.600" opacity=".55"/><path d="M1121.1 1088L1126.0 1172" stroke="#fbfbfa" stroke-width="3" opacity=".6"/><path d="M1127.2 1088L1131.5 1172" stroke="#d8d4ce" stroke-width="3.600" opacity=".55"/><path d="M1131.7 1088L1136.0 1172" stroke="#fbfbfa" stroke-width="3" opacity=".6"/><path d="M1137.8 1088L1141.5 1172" stroke="#d8d4ce" stroke-width="3.600" opacity=".55"/><path d="M1142.3 1088L1146.0 1172" stroke="#fbfbfa" stroke-width="3" opacity=".6"/><path d="M1148.4 1088L1151.4 1172" stroke="#d8d4ce" stroke-width="3.600" opacity=".55"/><path d="M1152.9 1088L1155.9 1172" stroke="#fbfbfa" stroke-width="3" opacity=".6"/><path d="M1159.0 1088L1161.4 1172" stroke="#d8d4ce" stroke-width="3.600" opacity=".55"/><path d="M1163.5 1088L1165.9 1172" stroke="#fbfbfa" stroke-width="3" opacity=".6"/><path d="M1169.6 1088L1171.3 1172" stroke="#d8d4ce" stroke-width="3.600" opacity=".55"/><path d="M1174.1 1088L1175.8 1172" stroke="#fbfbfa" stroke-width="3" opacity=".6"/><path d="M1180.2 1088L1181.3 1172" stroke="#d8d4ce" stroke-width="3.600" opacity=".55"/><path d="M1184.7 1088L1185.8 1172" stroke="#fbfbfa" stroke-width="3" opacity=".6"/><path d="M1190.8 1088L1191.3 1172" stroke="#d8d4ce" stroke-width="3.600" opacity=".55"/><path d="M1195.3 1088L1195.8 1172" stroke="#fbfbfa" stroke-width="3" opacity=".6"/><path d="M1201.4 1088L1201.2 1172" stroke="#d8d4ce" stroke-width="3.600" opacity=".55"/><path d="M1205.9 1088L1205.7 1172" stroke="#fbfbfa" stroke-width="3" opacity=".6"/><path d="M1212.0 1088L1211.2 1172" stroke="#d8d4ce" stroke-width="3.600" opacity=".55"/><path d="M1216.5 1088L1215.7 1172" stroke="#fbfbfa" stroke-width="3" opacity=".6"/><path d="M1222.6 1088L1221.2 1172" stroke="#d8d4ce" stroke-width="3.600" opacity=".55"/><path d="M1227.1 1088L1225.7 1172" stroke="#fbfbfa" stroke-width="3" opacity=".6"/><path d="M1233.2 1088L1231.1 1172" stroke="#d8d4ce" stroke-width="3.600" opacity=".55"/><path d="M1237.7 1088L1235.6 1172" stroke="#fbfbfa" stroke-width="3" opacity=".6"/><path d="M1243.8 1088L1241.1 1172" stroke="#d8d4ce" stroke-width="3.600" opacity=".55"/><path d="M1248.3 1088L1245.6 1172" stroke="#fbfbfa" stroke-width="3" opacity=".6"/><path d="M1254.4 1088L1251.1 1172" stroke="#d8d4ce" stroke-width="3.600" opacity=".55"/><path d="M1258.9 1088L1255.6 1172" stroke="#fbfbfa" stroke-width="3" opacity=".6"/><path d="M1094 1052Q1094 1043 1110 1042L1262 1038V1086Q1160 1090 1100 1084Q1094 1070 1094 1052z" fill="#f4f3f1"/><path d="M1100 1084Q1160 1090 1262 1086v5Q1160 1096 1101 1090z" fill="#d8d4ce" opacity=".8"/><ellipse cx="1190" cy="1052" rx="90" ry="10" fill="#cbc4b9"/><path d="M1136 1056l5-7 6 3 5-6 7 4 6-7 8 5 7-7 8 5 8-7 8 5 8-7 9 4 8-6 9 4 10-5 12 3V1066Q1190 1066 1136 1058z" fill="#2b2a2c" filter="url(#wob)"/><path d="M1094 1052Q1094 1046 1104 1044Q1110 1062 1262 1062v6Q1120 1070 1094 1056z" fill="#fafaf9"/></g><ellipse cx="1323" cy="1252" rx="175" ry="14" fill="#c9bfb0" opacity=".7" filter="url(#b4)"/><g filter="url(#bark)"><path d="M1160.500 1189C1160 1200 1160 1220 1164 1231C1230 1250 1400 1258 1488 1244L1488 1205C1400 1216 1230 1208 1160.500 1189z" fill="#927656"/></g><g filter="url(#bark2)" opacity=".55"><path d="M1160.500 1189C1160 1200 1160 1220 1164 1231C1230 1250 1400 1258 1488 1244L1488 1205C1400 1216 1230 1208 1160.500 1189z" fill="#927656"/></g><path d="M1164 1231C1230 1250 1400 1258 1488 1244" stroke="#b98a58" stroke-width="2.500" fill="none"/><path d="M1161 1187C1230 1207 1400 1215 1488 1203" stroke="#d9b98c" stroke-width="3" fill="none"/><path d="M1162 1186.500C1230 1205 1400 1212 1488 1200" stroke="#5a4630" stroke-width="1.600" fill="none"/><g filter="url(#bark)"><path d="M1162.500 1150C1161 1160 1162 1176 1166 1186C1230 1205 1400 1212 1487 1199L1487 1158C1400 1176 1230 1172 1162.500 1150z" fill="#8d7152"/></g><g filter="url(#bark2)" opacity=".55"><path d="M1162.500 1150C1161 1160 1162 1176 1166 1186C1230 1205 1400 1212 1487 1199L1487 1158C1400 1176 1230 1172 1162.500 1150z" fill="#927656"/></g><path d="M1162.500 1150C1175 1132 1250 1124 1323 1124C1400 1124 1470 1132 1487 1152C1470 1170 1400 1176 1323 1176C1250 1176 1180 1168 1162.500 1150z" fill="url(#face)" stroke="#c69a68" stroke-width="2.200"/><ellipse cx="1352" cy="1156" rx="108" ry="9" fill="#b9ad9a" opacity=".7" filter="url(#b2)"/><clipPath id="gl"><path d="M1213.500 700C1240 694 1262 702 1290 700C1320 696 1345 694 1372 699C1395 704 1420 702 1440 694C1455 688 1470 690 1486.500 697L1478.500 845C1477 862 1474 880 1466.500 900L1454 1122H1251L1236 900C1229 880 1227 862 1226.500 845z"/></clipPath><path d="M1211.500 652L1213.500 704H1486.500L1488.500 652Q1350 644 1211.500 652z" fill="#e9e6e2" opacity=".95"/><path d="M1225 690C1250 676 1270 684 1290 672C1310 660 1330 668 1350 672C1370 664 1400 666 1415 678C1430 684 1450 680 1470 690L1470 704H1225z" fill="#ece3db" opacity=".95" filter="url(#b2)"/><g filter="url(#b2)" opacity=".8"><ellipse cx="1312" cy="684" rx="22" ry="9" fill="#dcc6b6"/><ellipse cx="1304" cy="680" rx="12" ry="5" fill="#f3ece6"/><ellipse cx="1378" cy="686" rx="26" ry="9" fill="#d9c2b2"/><ellipse cx="1370" cy="681" rx="13" ry="5" fill="#f4eee8"/><ellipse cx="1346" cy="676" rx="14" ry="6" fill="#e0cdbf"/><ellipse cx="1262" cy="694" rx="24" ry="6" fill="#f1e9e2"/><ellipse cx="1440" cy="688" rx="22" ry="6" fill="#efe6de"/></g><ellipse cx="1350" cy="652.500" rx="138.500" ry="4.500" fill="none" stroke="#f6f5f3" stroke-width="2.200"/><path d="M1211.500 652L1214 700M1488.500 652L1486 700" stroke="#d6d3cf" stroke-width="2" fill="none"/><path d="M1216 662Q1350 654 1484 662" stroke="#fbfbfa" stroke-width="2" fill="none" opacity=".9"/><g clip-path="url(#gl)"><rect x="1205" y="680" width="290" height="450" fill="url(#milk)"/><rect x="1205" y="680" width="290" height="450" fill="url(#milkv)"/><path d="M1336 905L1334 1050H1390L1392 905z" fill="#e6cfb6" opacity=".62" filter="url(#b4)"/><path d="M1400 900L1404 1010H1452L1458 900z" fill="#dcc0a0" opacity=".4" filter="url(#b4)"/><path d="M1246 905L1252 1000H1290L1284 905z" fill="#d9b894" opacity=".3" filter="url(#b4)"/><path d="M1225 872Q1350 900 1478 872L1478 890Q1350 920 1225 890z" fill="#8e6c50" opacity=".28" filter="url(#b4)"/><g filter="url(#b1)" fill="none" stroke="#8a4a1c" opacity=".75"><path d="M1304 905c6 10 0 20 6 30s-2 24 4 36" stroke-width="3"/><path d="M1318 940c14 4 30 6 52 4" stroke-width="2.500"/><path d="M1296 960c8 12 2 30 8 44" stroke-width="2.500"/><path d="M1330 975c3 12 0 28 4 40" stroke-width="2"/><path d="M1266 930c4 12-2 24 4 34" stroke-width="2" opacity=".6"/></g><circle cx="1365" cy="782" r="2.6" fill="#7a5238" opacity=".8"/><circle cx="1339" cy="798" r="1.6" fill="#7a5238" opacity=".8"/><circle cx="1389" cy="787" r="2.1" fill="#7a5238" opacity=".8"/><circle cx="1330" cy="824" r="1.7" fill="#7a5238" opacity=".8"/><circle cx="1316" cy="843" r="1.6" fill="#7a5238" opacity=".8"/><circle cx="1356" cy="758" r="1.4" fill="#7a5238" opacity=".8"/><circle cx="1418" cy="750" r="1.3" fill="#7a5238" opacity=".8"/><circle cx="1300" cy="810" r="1.2" fill="#7a5238" opacity=".8"/><circle cx="1372" cy="812" r="1.2" fill="#7a5238" opacity=".8"/><circle cx="1432" cy="772" r="1.2" fill="#7a5238" opacity=".8"/><circle cx="1404" cy="738" r="1.2" fill="#7a5238" opacity=".8"/><circle cx="1346" cy="776" r="1.1" fill="#7a5238" opacity=".8"/><circle cx="1312" cy="860" r="1.3" fill="#7a5238" opacity=".8"/><ellipse cx="1469" cy="790" rx="3" ry="5" fill="#f6efe8" opacity=".9"/><ellipse cx="1445" cy="708" rx="2" ry="3.500" fill="#a07c5e" opacity=".8"/><filter id="wob" x="-5%" y="-5%" width="110%" height="110%"><feTurbulence type="fractalNoise" baseFrequency=".09" numOctaves="2" seed="11" result="t"/><feDisplacementMap in="SourceGraphic" in2="t" scale="7" xChannelSelector="R" yChannelSelector="G"/><feGaussianBlur stdDeviation=".5"/></filter><g filter="url(#wob)"><ellipse cx="1265.1" cy="902.7" rx="5.1" ry="4.5" fill="#1c120d" transform="rotate(-34 1265.1 902.7)"/><ellipse cx="1280.2" cy="900.9" rx="4.6" ry="4.6" fill="#1c120d" transform="rotate(6 1280.2 900.9)"/><ellipse cx="1428.9" cy="909.7" rx="7.7" ry="8.7" fill="#1c120d" transform="rotate(-13 1428.9 909.7)"/><ellipse cx="1390.6" cy="914.4" rx="6.3" ry="6.2" fill="#1c120d" transform="rotate(-32 1390.6 914.4)"/><ellipse cx="1369.6" cy="921.3" rx="6.8" ry="6.9" fill="#1c120d" transform="rotate(-33 1369.6 921.3)"/><ellipse cx="1411.5" cy="934.1" rx="8.3" ry="7.4" fill="#1c120d" transform="rotate(-12 1411.5 934.1)"/><ellipse cx="1432.4" cy="938.8" rx="7.8" ry="8.0" fill="#1c120d" transform="rotate(-33 1432.4 938.8)"/><ellipse cx="1447.5" cy="927.1" rx="7.7" ry="7.5" fill="#1c120d" transform="rotate(-12 1447.5 927.1)"/><ellipse cx="1266.2" cy="942.3" rx="6.3" ry="7.0" fill="#1c120d" transform="rotate(-3 1266.2 942.3)"/><ellipse cx="1290.6" cy="946.9" rx="7.3" ry="7.4" fill="#1c120d" transform="rotate(33 1290.6 946.9)"/><ellipse cx="1322.0" cy="949.2" rx="7.0" ry="7.7" fill="#1c120d" transform="rotate(-17 1322.0 949.2)"/><ellipse cx="1359.2" cy="949.2" rx="6.5" ry="6.6" fill="#1c120d" transform="rotate(-16 1359.2 949.2)"/><ellipse cx="1245.3" cy="953.9" rx="7.2" ry="7.3" fill="#1c120d" transform="rotate(-32 1245.3 953.9)"/><ellipse cx="1303.4" cy="969.0" rx="7.7" ry="7.9" fill="#1c120d" transform="rotate(23 1303.4 969.0)"/><ellipse cx="1368.5" cy="976.0" rx="8.0" ry="7.8" fill="#1c120d" transform="rotate(0 1368.5 976.0)"/><ellipse cx="1437.0" cy="963.2" rx="7.4" ry="8.4" fill="#1c120d" transform="rotate(6 1437.0 963.2)"/><ellipse cx="1451.0" cy="963.2" rx="7.0" ry="7.6" fill="#1c120d" transform="rotate(-9 1451.0 963.2)"/><ellipse cx="1327.8" cy="985.2" rx="6.4" ry="6.0" fill="#1c120d" transform="rotate(23 1327.8 985.2)"/><ellipse cx="1291.8" cy="991.1" rx="8.5" ry="9.1" fill="#1c120d" transform="rotate(-4 1291.8 991.1)"/><ellipse cx="1299.9" cy="992.2" rx="7.8" ry="6.8" fill="#1c120d" transform="rotate(25 1299.9 992.2)"/><ellipse cx="1406.8" cy="995.7" rx="7.3" ry="7.8" fill="#1c120d" transform="rotate(-21 1406.8 995.7)"/><ellipse cx="1426.6" cy="991.1" rx="8.6" ry="8.4" fill="#1c120d" transform="rotate(-31 1426.6 991.1)"/><ellipse cx="1444.0" cy="991.1" rx="8.2" ry="8.4" fill="#1c120d" transform="rotate(0 1444.0 991.1)"/><ellipse cx="1269.7" cy="1000.4" rx="7.1" ry="6.8" fill="#1c120d" transform="rotate(23 1269.7 1000.4)"/><ellipse cx="1370.8" cy="1000.4" rx="7.7" ry="7.6" fill="#1c120d" transform="rotate(-29 1370.8 1000.4)"/><ellipse cx="1313.9" cy="1001.5" rx="8.7" ry="8.6" fill="#1c120d" transform="rotate(-32 1313.9 1001.5)"/><ellipse cx="1331.3" cy="1006.2" rx="6.4" ry="6.7" fill="#1c120d" transform="rotate(33 1331.3 1006.2)"/><ellipse cx="1437.0" cy="1007.3" rx="8.8" ry="9.6" fill="#1c120d" transform="rotate(-4 1437.0 1007.3)"/><ellipse cx="1423.1" cy="1013.1" rx="8.1" ry="9.0" fill="#1c120d" transform="rotate(4 1423.1 1013.1)"/><ellipse cx="1289.5" cy="1015.5" rx="6.3" ry="6.2" fill="#1c120d" transform="rotate(-19 1289.5 1015.5)"/><ellipse cx="1388.2" cy="1018.9" rx="7.8" ry="7.8" fill="#1c120d" transform="rotate(-13 1388.2 1018.9)"/><ellipse cx="1326.7" cy="1025.9" rx="8.2" ry="7.3" fill="#1c120d" transform="rotate(-9 1326.7 1025.9)"/><ellipse cx="1354.5" cy="1029.4" rx="7.2" ry="8.1" fill="#1c120d" transform="rotate(23 1354.5 1029.4)"/><ellipse cx="1311.6" cy="1034.1" rx="6.4" ry="6.3" fill="#1c120d" transform="rotate(30 1311.6 1034.1)"/><ellipse cx="1411.5" cy="1034.1" rx="6.9" ry="6.2" fill="#1c120d" transform="rotate(15 1411.5 1034.1)"/><ellipse cx="1284.8" cy="1039.9" rx="9.7" ry="9.1" fill="#1c120d" transform="rotate(13 1284.8 1039.9)"/><ellipse cx="1259.3" cy="1037.5" rx="8.8" ry="9.2" fill="#1c120d" transform="rotate(8 1259.3 1037.5)"/><ellipse cx="1266.2" cy="1030.6" rx="8.7" ry="7.8" fill="#1c120d" transform="rotate(-18 1266.2 1030.6)"/><ellipse cx="1378.9" cy="1044.5" rx="7.6" ry="7.9" fill="#1c120d" transform="rotate(-39 1378.9 1044.5)"/><ellipse cx="1392.9" cy="1048.0" rx="8.6" ry="8.8" fill="#1c120d" transform="rotate(-7 1392.9 1048.0)"/><ellipse cx="1427.7" cy="1049.2" rx="8.0" ry="7.1" fill="#150d09" transform="rotate(28 1427.7 1049.2)"/><ellipse cx="1442.9" cy="1048.0" rx="8.2" ry="8.4" fill="#1c120d" transform="rotate(-24 1442.9 1048.0)"/><ellipse cx="1353.4" cy="1059.6" rx="9.2" ry="9.2" fill="#150d09" transform="rotate(39 1353.4 1059.6)"/><ellipse cx="1320.8" cy="1061.9" rx="9.1" ry="9.7" fill="#150d09" transform="rotate(18 1320.8 1061.9)"/><ellipse cx="1297.6" cy="1060.8" rx="9.8" ry="10.6" fill="#150d09" transform="rotate(31 1297.6 1060.8)"/><ellipse cx="1410.3" cy="1064.3" rx="8.3" ry="8.1" fill="#150d09" transform="rotate(-27 1410.3 1064.3)"/><ellipse cx="1437.0" cy="1071.2" rx="8.6" ry="8.3" fill="#150d09" transform="rotate(-16 1437.0 1071.2)"/><ellipse cx="1381.3" cy="1071.2" rx="7.3" ry="6.7" fill="#150d09" transform="rotate(-20 1381.3 1071.2)"/><ellipse cx="1282.5" cy="1073.6" rx="7.5" ry="7.7" fill="#150d09" transform="rotate(-27 1282.5 1073.6)"/><ellipse cx="1418.5" cy="1082.9" rx="7.1" ry="6.4" fill="#150d09" transform="rotate(-28 1418.5 1082.9)"/><ellipse cx="1269.7" cy="1084.0" rx="10.0" ry="10.3" fill="#150d09" transform="rotate(-31 1269.7 1084.0)"/><ellipse cx="1309.2" cy="1091.0" rx="9.7" ry="10.1" fill="#150d09" transform="rotate(-21 1309.2 1091.0)"/><ellipse cx="1355.7" cy="1089.8" rx="9.0" ry="10.3" fill="#150d09" transform="rotate(37 1355.7 1089.8)"/><ellipse cx="1402.2" cy="1092.1" rx="8.2" ry="7.3" fill="#150d09" transform="rotate(22 1402.2 1092.1)"/><ellipse cx="1336.0" cy="1099.1" rx="10.1" ry="10.0" fill="#150d09" transform="rotate(21 1336.0 1099.1)"/><ellipse cx="1372.0" cy="1102.6" rx="8.1" ry="7.2" fill="#150d09" transform="rotate(3 1372.0 1102.6)"/><ellipse cx="1276.7" cy="1095.6" rx="9.3" ry="9.3" fill="#150d09" transform="rotate(-20 1276.7 1095.6)"/><ellipse cx="1248.8" cy="872.5" rx="5.4" ry="5.0" fill="#1c120d" transform="rotate(27 1248.8 872.5)"/><ellipse cx="1454.5" cy="857.4" rx="5.1" ry="5.4" fill="#1c120d" transform="rotate(-37 1454.5 857.4)"/><ellipse cx="1453.3" cy="1042.2" rx="9.4" ry="8.8" fill="#1c120d" transform="rotate(-29 1453.3 1042.2)"/><ellipse cx="1452.1" cy="1002.7" rx="8.0" ry="7.4" fill="#1c120d" transform="rotate(6 1452.1 1002.7)"/><ellipse cx="1434.7" cy="891.1" rx="6.2" ry="5.9" fill="#1c120d" transform="rotate(-12 1434.7 891.1)"/><ellipse cx="1460.3" cy="919.0" rx="7.6" ry="8.2" fill="#1c120d" transform="rotate(2 1460.3 919.0)"/><ellipse cx="1339.4" cy="970.1" rx="7.9" ry="8.1" fill="#1c120d" transform="rotate(-16 1339.4 970.1)"/><ellipse cx="1395.2" cy="979.4" rx="8.3" ry="9.1" fill="#1c120d" transform="rotate(-11 1395.2 979.4)"/><ellipse cx="1348.7" cy="1000.4" rx="6.7" ry="6.7" fill="#1c120d" transform="rotate(-37 1348.7 1000.4)"/><ellipse cx="1402.2" cy="1016.6" rx="8.8" ry="9.5" fill="#1c120d" transform="rotate(20 1402.2 1016.6)"/><ellipse cx="1276.7" cy="979.4" rx="6.9" ry="7.3" fill="#1c120d" transform="rotate(4 1276.7 979.4)"/><ellipse cx="1255.8" cy="988.7" rx="7.4" ry="8.3" fill="#1c120d" transform="rotate(4 1255.8 988.7)"/><ellipse cx="1455.6" cy="979.4" rx="8.7" ry="8.3" fill="#1c120d" transform="rotate(-12 1455.6 979.4)"/><ellipse cx="1362.7" cy="1016.6" rx="6.5" ry="6.4" fill="#1c120d" transform="rotate(3 1362.7 1016.6)"/><ellipse cx="1299.9" cy="1012.0" rx="6.7" ry="7.0" fill="#1c120d" transform="rotate(38 1299.9 1012.0)"/><ellipse cx="1418.5" cy="974.8" rx="8.4" ry="8.3" fill="#1c120d" transform="rotate(4 1418.5 974.8)"/><ellipse cx="1339.4" cy="1044.5" rx="9.5" ry="8.3" fill="#1c120d" transform="rotate(-25 1339.4 1044.5)"/><ellipse cx="1432.4" cy="1030.6" rx="8.6" ry="9.3" fill="#1c120d" transform="rotate(-15 1432.4 1030.6)"/><ellipse cx="1258.1" cy="1056.1" rx="8.6" ry="7.7" fill="#150d09" transform="rotate(2 1258.1 1056.1)"/><ellipse cx="1367.3" cy="1074.7" rx="7.4" ry="8.4" fill="#150d09" transform="rotate(10 1367.3 1074.7)"/><ellipse cx="1330.1" cy="1079.4" rx="8.5" ry="9.1" fill="#150d09" transform="rotate(-30 1330.1 1079.4)"/><ellipse cx="1399.9" cy="1074.7" rx="9.3" ry="8.4" fill="#150d09" transform="rotate(-24 1399.9 1074.7)"/><ellipse cx="1446.3" cy="1063.1" rx="7.2" ry="7.4" fill="#150d09" transform="rotate(19 1446.3 1063.1)"/><ellipse cx="1297.6" cy="1081.7" rx="9.5" ry="8.5" fill="#150d09" transform="rotate(36 1297.6 1081.7)"/><circle cx="1444.3" cy="1104.3" r="7.1" fill="#120b08" opacity=".85"/><circle cx="1362.2" cy="1083.2" r="6.0" fill="#120b08" opacity=".85"/><circle cx="1442.5" cy="1104.0" r="7.6" fill="#120b08" opacity=".85"/><circle cx="1435.4" cy="1095.4" r="8.6" fill="#120b08" opacity=".85"/><circle cx="1415.0" cy="1086.4" r="6.8" fill="#120b08" opacity=".85"/><circle cx="1313.7" cy="1087.6" r="7.8" fill="#120b08" opacity=".85"/><circle cx="1307.3" cy="1094.8" r="6.4" fill="#120b08" opacity=".85"/><circle cx="1430.9" cy="1092.2" r="7.4" fill="#120b08" opacity=".85"/><circle cx="1368.8" cy="1114.2" r="7.3" fill="#120b08" opacity=".85"/><circle cx="1432.4" cy="1098.1" r="7.6" fill="#120b08" opacity=".85"/><circle cx="1357.5" cy="1078.7" r="7.3" fill="#120b08" opacity=".85"/><circle cx="1292.8" cy="1078.2" r="8.4" fill="#120b08" opacity=".85"/><circle cx="1290.7" cy="1096.9" r="8.2" fill="#120b08" opacity=".85"/><circle cx="1363.7" cy="1091.0" r="7.6" fill="#120b08" opacity=".85"/><circle cx="1363.5" cy="1109.4" r="6.3" fill="#120b08" opacity=".85"/><circle cx="1364.5" cy="1087.9" r="6.8" fill="#120b08" opacity=".85"/><circle cx="1404.7" cy="1098.3" r="7.7" fill="#120b08" opacity=".85"/><circle cx="1402.4" cy="1114.5" r="7.3" fill="#120b08" opacity=".85"/><circle cx="1374.4" cy="1098.2" r="7.5" fill="#120b08" opacity=".85"/><circle cx="1389.6" cy="1096.1" r="7.6" fill="#120b08" opacity=".85"/><circle cx="1348.8" cy="1115.7" r="8.1" fill="#120b08" opacity=".85"/><circle cx="1424.5" cy="1115.7" r="6.8" fill="#120b08" opacity=".85"/><circle cx="1364.3" cy="1115.7" r="8.5" fill="#120b08" opacity=".85"/><circle cx="1284.1" cy="1082.9" r="7.3" fill="#120b08" opacity=".85"/><circle cx="1271.8" cy="1087.6" r="6.2" fill="#120b08" opacity=".85"/><circle cx="1385.2" cy="1109.4" r="8.7" fill="#120b08" opacity=".85"/><circle cx="1287.3" cy="1106.6" r="8.0" fill="#120b08" opacity=".85"/><circle cx="1285.2" cy="1113.3" r="8.9" fill="#120b08" opacity=".85"/><circle cx="1299.7" cy="1116.1" r="7.2" fill="#120b08" opacity=".85"/><circle cx="1350.6" cy="1117.6" r="8.5" fill="#120b08" opacity=".85"/><circle cx="1288.7" cy="1095.3" r="7.5" fill="#120b08" opacity=".85"/><circle cx="1322.4" cy="1085.8" r="7.0" fill="#120b08" opacity=".85"/><circle cx="1395.2" cy="1078.8" r="7.7" fill="#120b08" opacity=".85"/><circle cx="1341.7" cy="1078.7" r="7.0" fill="#120b08" opacity=".85"/><circle cx="1376.5" cy="1098.5" r="6.2" fill="#120b08" opacity=".85"/><circle cx="1445.2" cy="1109.5" r="8.9" fill="#120b08" opacity=".85"/><circle cx="1277.9" cy="1088.6" r="6.1" fill="#120b08" opacity=".85"/><circle cx="1406.0" cy="1088.8" r="6.4" fill="#120b08" opacity=".85"/><circle cx="1338.2" cy="1114.5" r="8.5" fill="#120b08" opacity=".85"/><circle cx="1307.1" cy="1084.0" r="8.8" fill="#120b08" opacity=".85"/><circle cx="1366.4" cy="1106.0" r="6.3" fill="#120b08" opacity=".85"/><circle cx="1268.9" cy="1105.5" r="7.3" fill="#120b08" opacity=".85"/><circle cx="1271.8" cy="1115.5" r="7.9" fill="#120b08" opacity=".85"/><circle cx="1410.3" cy="1081.3" r="8.6" fill="#120b08" opacity=".85"/><circle cx="1270.7" cy="1112.5" r="7.4" fill="#120b08" opacity=".85"/><circle cx="1322.4" cy="1100.1" r="8.8" fill="#120b08" opacity=".85"/></g><g stroke="#3a2a1e" opacity=".16" stroke-width="1.500"><path d="M1290 900L1296 1122M1394 900L1392 1122M1448 900L1440 1122"/></g><g stroke="#fff" opacity=".1" stroke-width="2"><path d="M1244 900L1258 1122M1334 900L1336 1122"/></g><path d="M1238 930L1251 1122H1262L1248 930z" fill="#2a1a10" opacity=".3" filter="url(#b2)"/><path d="M1464 930L1454 1122H1443L1455 930z" fill="#2a1a10" opacity=".28" filter="url(#b2)"/><path d="M1213 700L1226.500 845 1236 900 1251 1122" stroke="#f4e6d6" stroke-width="5" fill="none" opacity=".55"/><path d="M1486 697L1478.500 845 1466.500 900 1454 1122" stroke="#e8d2ba" stroke-width="4" fill="none" opacity=".5"/></g><path d="M1213.500 700C1240 694 1262 702 1290 700C1320 696 1345 694 1372 699C1395 704 1420 702 1440 694C1455 688 1470 690 1486.500 697" stroke="#f6eee6" stroke-width="2.600" fill="none" opacity=".9" filter="url(#b1)"/><path d="M1213.500 700L1226.500 845C1227 862 1229 880 1236 900L1251 1122" stroke="#cdbfae" stroke-width="1.200" fill="none" opacity=".8"/><path d="M1486.500 697L1478.500 845C1477 862 1474 880 1466.500 900L1454 1122" stroke="#bfae98" stroke-width="1.200" fill="none" opacity=".8"/><linearGradient id="gb2" x1="0" y1="0" x2="0" y2="1"><stop offset="0" stop-color="#1e120b"/><stop offset=".22" stop-color="#3a2a20"/><stop offset=".4" stop-color="#a59a8c"/><stop offset=".55" stop-color="#e9e6e0"/><stop offset="1" stop-color="#dcd8d0"/></linearGradient><path d="M1251 1116H1454L1452 1146 1408 1156H1300L1255 1147z" fill="url(#gb2)"/><path d="M1266 1137L1300 1143H1408L1442 1137L1441 1145 1408 1152H1300L1264 1145z" fill="#fbfaf8" opacity=".85"/><path d="M1255 1147L1300 1156H1408L1452 1146" stroke="#8f8c86" stroke-width="1.600" fill="none" opacity=".8"/><path d="M1300 1132V1156M1408 1132V1156" stroke="#fff" stroke-width="2.200" opacity=".8"/><path d="M1258.500 1122L1262 1146M1447.500 1122L1445 1146" stroke="#4e4a44" stroke-width="3.500" opacity=".75"/><path d="M1253.500 1120L1256.500 1146" stroke="#fff" stroke-width="2"/><path d="M1451.500 1120L1449.500 1146" stroke="#fff" stroke-width="2"/><path d="M1310 1151.500h90" stroke="#3c3a36" stroke-width="1.600" opacity=".55" stroke-dasharray="5 6"/><ellipse cx="1612" cy="1306" rx="122" ry="9" fill="#cfc7bb" opacity=".8" filter="url(#b2)"/><path d="M1479 1178L1497 1296Q1500 1304 1520 1306Q1610 1316 1702 1306Q1722 1303 1724 1294L1737 1178z" fill="url(#ram)"/><path d="M1486.0 1197.2L1498.4 1302" stroke="#dedbd6" stroke-width="3.600" opacity=".7"/><path d="M1490.6 1197.2L1502.6 1302" stroke="#fdfdfc" stroke-width="3" opacity=".7"/><path d="M1496.1 1198.6L1507.5 1302" stroke="#dedbd6" stroke-width="3.600" opacity=".7"/><path d="M1500.7 1198.6L1511.7 1302" stroke="#fdfdfc" stroke-width="3" opacity=".7"/><path d="M1506.2 1199.9L1516.6 1302" stroke="#dedbd6" stroke-width="3.600" opacity=".7"/><path d="M1510.8 1199.9L1520.8 1302" stroke="#fdfdfc" stroke-width="3" opacity=".7"/><path d="M1516.3 1201.0L1525.7 1302" stroke="#dedbd6" stroke-width="3.600" opacity=".7"/><path d="M1520.9 1201.0L1529.9 1302" stroke="#fdfdfc" stroke-width="3" opacity=".7"/><path d="M1526.4 1202.1L1534.8 1302" stroke="#dedbd6" stroke-width="3.600" opacity=".7"/><path d="M1531.0 1202.1L1539.0 1302" stroke="#fdfdfc" stroke-width="3" opacity=".7"/><path d="M1536.5 1203.0L1543.8 1302" stroke="#dedbd6" stroke-width="3.600" opacity=".7"/><path d="M1541.1 1203.0L1548.0 1302" stroke="#fdfdfc" stroke-width="3" opacity=".7"/><path d="M1546.6 1203.8L1552.9 1302" stroke="#dedbd6" stroke-width="3.600" opacity=".7"/><path d="M1551.2 1203.8L1557.1 1302" stroke="#fdfdfc" stroke-width="3" opacity=".7"/><path d="M1556.7 1204.4L1562.0 1302" stroke="#dedbd6" stroke-width="3.600" opacity=".7"/><path d="M1561.3 1204.4L1566.2 1302" stroke="#fdfdfc" stroke-width="3" opacity=".7"/><path d="M1566.8 1205.0L1571.1 1302" stroke="#dedbd6" stroke-width="3.600" opacity=".7"/><path d="M1571.4 1205.0L1575.3 1302" stroke="#fdfdfc" stroke-width="3" opacity=".7"/><path d="M1576.9 1205.4L1580.2 1302" stroke="#dedbd6" stroke-width="3.600" opacity=".7"/><path d="M1581.5 1205.4L1584.4 1302" stroke="#fdfdfc" stroke-width="3" opacity=".7"/><path d="M1587.0 1205.7L1589.3 1302" stroke="#dedbd6" stroke-width="3.600" opacity=".7"/><path d="M1591.6 1205.7L1593.5 1302" stroke="#fdfdfc" stroke-width="3" opacity=".7"/><path d="M1597.1 1205.9L1598.4 1302" stroke="#dedbd6" stroke-width="3.600" opacity=".7"/><path d="M1601.7 1205.9L1602.6 1302" stroke="#fdfdfc" stroke-width="3" opacity=".7"/><path d="M1607.2 1206.0L1607.5 1302" stroke="#dedbd6" stroke-width="3.600" opacity=".7"/><path d="M1611.8 1206.0L1611.7 1302" stroke="#fdfdfc" stroke-width="3" opacity=".7"/><path d="M1617.3 1205.9L1616.6 1302" stroke="#dedbd6" stroke-width="3.600" opacity=".7"/><path d="M1621.9 1205.9L1620.8 1302" stroke="#fdfdfc" stroke-width="3" opacity=".7"/><path d="M1627.4 1205.8L1625.7 1302" stroke="#dedbd6" stroke-width="3.600" opacity=".7"/><path d="M1632.0 1205.8L1629.9 1302" stroke="#fdfdfc" stroke-width="3" opacity=".7"/><path d="M1637.5 1205.5L1634.8 1302" stroke="#dedbd6" stroke-width="3.600" opacity=".7"/><path d="M1642.1 1205.5L1639.0 1302" stroke="#fdfdfc" stroke-width="3" opacity=".7"/><path d="M1647.6 1205.1L1643.8 1302" stroke="#dedbd6" stroke-width="3.600" opacity=".7"/><path d="M1652.2 1205.1L1648.0 1302" stroke="#fdfdfc" stroke-width="3" opacity=".7"/><path d="M1657.7 1204.5L1652.9 1302" stroke="#dedbd6" stroke-width="3.600" opacity=".7"/><path d="M1662.3 1204.5L1657.1 1302" stroke="#fdfdfc" stroke-width="3" opacity=".7"/><path d="M1667.8 1203.9L1662.0 1302" stroke="#dedbd6" stroke-width="3.600" opacity=".7"/><path d="M1672.4 1203.9L1666.2 1302" stroke="#fdfdfc" stroke-width="3" opacity=".7"/><path d="M1677.9 1203.1L1671.1 1302" stroke="#dedbd6" stroke-width="3.600" opacity=".7"/><path d="M1682.5 1203.1L1675.3 1302" stroke="#fdfdfc" stroke-width="3" opacity=".7"/><path d="M1688.0 1202.2L1680.2 1302" stroke="#dedbd6" stroke-width="3.600" opacity=".7"/><path d="M1692.6 1202.2L1684.4 1302" stroke="#fdfdfc" stroke-width="3" opacity=".7"/><path d="M1698.1 1201.2L1689.3 1302" stroke="#dedbd6" stroke-width="3.600" opacity=".7"/><path d="M1702.7 1201.2L1693.5 1302" stroke="#fdfdfc" stroke-width="3" opacity=".7"/><path d="M1708.2 1200.1L1698.4 1302" stroke="#dedbd6" stroke-width="3.600" opacity=".7"/><path d="M1712.8 1200.1L1702.6 1302" stroke="#fdfdfc" stroke-width="3" opacity=".7"/><path d="M1718.3 1198.8L1707.5 1302" stroke="#dedbd6" stroke-width="3.600" opacity=".7"/><path d="M1722.9 1198.8L1711.7 1302" stroke="#fdfdfc" stroke-width="3" opacity=".7"/><path d="M1728.4 1197.4L1716.6 1302" stroke="#dedbd6" stroke-width="3.600" opacity=".7"/><path d="M1733.0 1197.4L1720.8 1302" stroke="#fdfdfc" stroke-width="3" opacity=".7"/><path d="M1497 1294Q1500 1304 1520 1306Q1610 1316 1702 1306Q1722 1303 1724 1294Q1610 1308 1497 1294z" fill="#eceae6"/><path d="M1474.500 1150Q1474 1138 1486 1134L1730 1134Q1741.500 1138 1741 1150L1737.500 1186Q1610 1208 1478.500 1186z" fill="#f7f7f6"/><path d="M1478.500 1186Q1610 1208 1737.500 1186l-.5 6Q1610 1214 1479 1192z" fill="#d9d6d1" opacity=".85"/><ellipse cx="1608" cy="1146" rx="128" ry="22" fill="#ddd9d3"/><path d="M1476 1148Q1480 1170 1608 1172Q1736 1170 1740 1148" stroke="#ffffff" stroke-width="3" fill="none" opacity=".9"/><path d="M1531 1162q8 6 22 3" stroke="#c9935a" stroke-width="1.800" fill="none" opacity=".8"/><path d="M1490 1152C1496 1132 1530 1112 1556 1104C1580 1096 1610 1094 1640 1100C1670 1104 1700 1114 1722 1130C1736 1140 1736 1150 1732 1156Q1610 1174 1490 1156z" fill="#1a100b"/><circle cx="1602.0" cy="1102.3" r="13.5" fill="url(#pearl)"/><ellipse cx="1597.7" cy="1096.6" rx="3.2" ry="2.0" fill="#f0e4d8" opacity=".5" transform="rotate(-25 1597.7 1096.6)"/><circle cx="1579.4" cy="1102.5" r="10" fill="url(#pearl)"/><ellipse cx="1576.2" cy="1098.3" rx="2.4" ry="1.5" fill="#f0e4d8" opacity=".5" transform="rotate(-25 1576.2 1098.3)"/><circle cx="1561.1" cy="1105.1" r="10" fill="url(#pearl)"/><ellipse cx="1557.9" cy="1100.9" rx="2.4" ry="1.5" fill="#f0e4d8" opacity=".5" transform="rotate(-25 1557.9 1100.9)"/><circle cx="1641.4" cy="1105.1" r="9" fill="url(#pearl)"/><ellipse cx="1638.5" cy="1101.3" rx="2.2" ry="1.3" fill="#f0e4d8" opacity=".5" transform="rotate(-25 1638.5 1101.3)"/><circle cx="1625.9" cy="1106.5" r="11" fill="url(#pearl)"/><ellipse cx="1622.4" cy="1101.9" rx="2.6" ry="1.6" fill="#f0e4d8" opacity=".5" transform="rotate(-25 1622.4 1101.9)"/><circle cx="1545.6" cy="1111.4" r="10" fill="url(#pearl)"/><ellipse cx="1542.4" cy="1107.2" rx="2.4" ry="1.5" fill="#f0e4d8" opacity=".5" transform="rotate(-25 1542.4 1107.2)"/><circle cx="1672.4" cy="1111.4" r="10" fill="url(#pearl)"/><ellipse cx="1669.2" cy="1107.2" rx="2.4" ry="1.5" fill="#f0e4d8" opacity=".5" transform="rotate(-25 1669.2 1107.2)"/><circle cx="1637.2" cy="1112.1" r="10" fill="url(#pearl)"/><ellipse cx="1634.0" cy="1107.9" rx="2.4" ry="1.5" fill="#f0e4d8" opacity=".5" transform="rotate(-25 1634.0 1107.9)"/><circle cx="1582.3" cy="1113.5" r="11" fill="url(#pearl)"/><ellipse cx="1578.7" cy="1108.9" rx="2.6" ry="1.6" fill="#f0e4d8" opacity=".5" transform="rotate(-25 1578.7 1108.9)"/><circle cx="1659.7" cy="1113.5" r="12" fill="url(#pearl)"/><ellipse cx="1655.9" cy="1108.5" rx="2.9" ry="1.8" fill="#f0e4d8" opacity=".5" transform="rotate(-25 1655.9 1108.5)"/><circle cx="1563.9" cy="1114.9" r="10" fill="url(#pearl)"/><ellipse cx="1560.7" cy="1110.7" rx="2.4" ry="1.5" fill="#f0e4d8" opacity=".5" transform="rotate(-25 1560.7 1110.7)"/><circle cx="1614.6" cy="1116.3" r="11" fill="url(#pearl)"/><ellipse cx="1611.1" cy="1111.7" rx="2.6" ry="1.6" fill="#f0e4d8" opacity=".5" transform="rotate(-25 1611.1 1111.7)"/><circle cx="1710.4" cy="1118.5" r="12" fill="url(#pearl)"/><ellipse cx="1706.6" cy="1113.4" rx="2.9" ry="1.8" fill="#f0e4d8" opacity=".5" transform="rotate(-25 1706.6 1113.4)"/><circle cx="1647.0" cy="1119.2" r="12" fill="url(#pearl)"/><ellipse cx="1643.2" cy="1114.1" rx="2.9" ry="1.8" fill="#f0e4d8" opacity=".5" transform="rotate(-25 1643.2 1114.1)"/><circle cx="1690.7" cy="1119.2" r="10" fill="url(#pearl)"/><ellipse cx="1687.5" cy="1115.0" rx="2.4" ry="1.5" fill="#f0e4d8" opacity=".5" transform="rotate(-25 1687.5 1115.0)"/><circle cx="1556.9" cy="1120.6" r="11" fill="url(#pearl)"/><ellipse cx="1553.4" cy="1115.9" rx="2.6" ry="1.6" fill="#f0e4d8" opacity=".5" transform="rotate(-25 1553.4 1115.9)"/><circle cx="1533.0" cy="1122.0" r="13" fill="url(#pearl)"/><ellipse cx="1528.8" cy="1116.5" rx="3.1" ry="1.9" fill="#f0e4d8" opacity=".5" transform="rotate(-25 1528.8 1116.5)"/><circle cx="1597.7" cy="1124.8" r="12" fill="url(#pearl)"/><ellipse cx="1593.9" cy="1119.7" rx="2.9" ry="1.8" fill="#f0e4d8" opacity=".5" transform="rotate(-25 1593.9 1119.7)"/><circle cx="1580.8" cy="1126.2" r="11" fill="url(#pearl)"/><ellipse cx="1577.3" cy="1121.6" rx="2.6" ry="1.6" fill="#f0e4d8" opacity=".5" transform="rotate(-25 1577.3 1121.6)"/><circle cx="1676.6" cy="1127.6" r="12" fill="url(#pearl)"/><ellipse cx="1672.8" cy="1122.6" rx="2.9" ry="1.8" fill="#f0e4d8" opacity=".5" transform="rotate(-25 1672.8 1122.6)"/><circle cx="1627.3" cy="1129.0" r="12" fill="url(#pearl)"/><ellipse cx="1623.5" cy="1124.0" rx="2.9" ry="1.8" fill="#f0e4d8" opacity=".5" transform="rotate(-25 1623.5 1124.0)"/><circle cx="1518.9" cy="1129.0" r="10" fill="url(#pearl)"/><ellipse cx="1515.7" cy="1124.8" rx="2.4" ry="1.5" fill="#f0e4d8" opacity=".5" transform="rotate(-25 1515.7 1124.8)"/><circle cx="1720.3" cy="1130.4" r="11" fill="url(#pearl)"/><ellipse cx="1716.8" cy="1125.8" rx="2.6" ry="1.6" fill="#f0e4d8" opacity=".5" transform="rotate(-25 1716.8 1125.8)"/><circle cx="1659.7" cy="1133.2" r="11" fill="url(#pearl)"/><ellipse cx="1656.2" cy="1128.6" rx="2.6" ry="1.6" fill="#f0e4d8" opacity=".5" transform="rotate(-25 1656.2 1128.6)"/><circle cx="1703.4" cy="1133.2" r="13" fill="url(#pearl)"/><ellipse cx="1699.2" cy="1127.8" rx="3.1" ry="1.9" fill="#f0e4d8" opacity=".5" transform="rotate(-25 1699.2 1127.8)"/><circle cx="1606.2" cy="1134.6" r="11" fill="url(#pearl)"/><ellipse cx="1602.7" cy="1130.0" rx="2.6" ry="1.6" fill="#f0e4d8" opacity=".5" transform="rotate(-25 1602.7 1130.0)"/><circle cx="1724.5" cy="1137.5" r="12" fill="url(#pearl)"/><ellipse cx="1720.7" cy="1132.4" rx="2.9" ry="1.8" fill="#f0e4d8" opacity=".5" transform="rotate(-25 1720.7 1132.4)"/><circle cx="1513.2" cy="1140.3" r="12" fill="url(#pearl)"/><ellipse cx="1509.4" cy="1135.2" rx="2.9" ry="1.8" fill="#f0e4d8" opacity=".5" transform="rotate(-25 1509.4 1135.2)"/><circle cx="1566.8" cy="1140.3" r="12" fill="url(#pearl)"/><ellipse cx="1562.9" cy="1135.2" rx="2.9" ry="1.8" fill="#f0e4d8" opacity=".5" transform="rotate(-25 1562.9 1135.2)"/><circle cx="1593.5" cy="1141.7" r="13" fill="url(#pearl)"/><ellipse cx="1589.4" cy="1136.2" rx="3.1" ry="1.9" fill="#f0e4d8" opacity=".5" transform="rotate(-25 1589.4 1136.2)"/><circle cx="1700.6" cy="1141.7" r="13" fill="url(#pearl)"/><ellipse cx="1696.4" cy="1136.2" rx="3.1" ry="1.9" fill="#f0e4d8" opacity=".5" transform="rotate(-25 1696.4 1136.2)"/><circle cx="1538.6" cy="1143.1" r="13" fill="url(#pearl)"/><ellipse cx="1534.4" cy="1137.6" rx="3.1" ry="1.9" fill="#f0e4d8" opacity=".5" transform="rotate(-25 1534.4 1137.6)"/><circle cx="1644.2" cy="1143.1" r="13" fill="url(#pearl)"/><ellipse cx="1640.1" cy="1137.6" rx="3.1" ry="1.9" fill="#f0e4d8" opacity=".5" transform="rotate(-25 1640.1 1137.6)"/><circle cx="1730.1" cy="1144.5" r="10" fill="url(#pearl)"/><ellipse cx="1726.9" cy="1140.3" rx="2.4" ry="1.5" fill="#f0e4d8" opacity=".5" transform="rotate(-25 1726.9 1140.3)"/><circle cx="1620.3" cy="1147.3" r="12" fill="url(#pearl)"/><ellipse cx="1616.4" cy="1142.3" rx="2.9" ry="1.8" fill="#f0e4d8" opacity=".5" transform="rotate(-25 1616.4 1142.3)"/><circle cx="1672.4" cy="1147.3" r="12" fill="url(#pearl)"/><ellipse cx="1668.6" cy="1142.3" rx="2.9" ry="1.8" fill="#f0e4d8" opacity=".5" transform="rotate(-25 1668.6 1142.3)"/><circle cx="1499.2" cy="1147.3" r="10" fill="url(#pearl)"/><ellipse cx="1496.0" cy="1143.1" rx="2.4" ry="1.5" fill="#f0e4d8" opacity=".5" transform="rotate(-25 1496.0 1143.1)"/><circle cx="1690.7" cy="1147.3" r="11" fill="url(#pearl)"/><ellipse cx="1687.2" cy="1142.7" rx="2.6" ry="1.6" fill="#f0e4d8" opacity=".5" transform="rotate(-25 1687.2 1142.7)"/><path d="M1476 1150Q1480 1172 1608 1174Q1736 1172 1740 1150L1739 1160Q1700 1186 1608 1186Q1500 1186 1477 1160z" fill="#f8f8f7"/></g></svg>
<svg class="a" style="left:0;top:0" width="2560" height="1420" viewBox="0 0 2560 1420"><rect x="7.300" y="154.600" width="55" height="42.600" rx="4" fill="#2e2e2e" stroke="#626262" stroke-width="1.200"/><path d="M57.200 186.8v5h-5z" fill="#c4c4c4"/><path d="M57.200 233v5h-5z" fill="#c4c4c4"/><path d="M57.200 279.4v5h-5z" fill="#c4c4c4"/><path d="M57.200 325.6v5h-5z" fill="#c4c4c4"/><path d="M57.200 371.6v5h-5z" fill="#c4c4c4"/><path d="M57.200 464v5h-5z" fill="#c4c4c4"/><path d="M57.200 510.20000000000005v5h-5z" fill="#c4c4c4"/><path d="M57.200 556.4v5h-5z" fill="#c4c4c4"/><path d="M57.200 602.6v5h-5z" fill="#c4c4c4"/><path d="M57.200 649v5h-5z" fill="#c4c4c4"/><path d="M57.200 695v5h-5z" fill="#c4c4c4"/><path d="M57.200 741.3v5h-5z" fill="#c4c4c4"/><path d="M57.200 787.6v5h-5z" fill="#c4c4c4"/><path d="M57.200 833.7v5h-5z" fill="#c4c4c4"/><path d="M57.200 880v5h-5z" fill="#c4c4c4"/><path d="M57.200 926v5h-5z" fill="#c4c4c4"/><path d="M57.200 972.4v5h-5z" fill="#c4c4c4"/><path d="M57.200 1018.5v5h-5z" fill="#c4c4c4"/><path d="M57.200 1064.7v5h-5z" fill="#c4c4c4"/><path d="M57.200 1157.3v5h-5z" fill="#c4c4c4"/><path d="M57.200 1349v5h-5z" fill="#c4c4c4"/><path d="M24.2 176.6H44.8M34.5 166.29999999999998V186.9" stroke="#e2e2e2" stroke-width="2.1" fill="none"/><path fill="#e2e2e2" d="M34.5 163.29999999999998l4.4 5.2h-8.8zM34.5 189.9l4.4 -5.2h-8.8zM21.2 176.6l5.2 -4.4v8.8zM47.8 176.6l-5.2 -4.4v8.8z"/><rect x="22.300" y="211.700" width="25.600" height="21.200" fill="none" stroke="#e2e2e2" stroke-width="2" stroke-dasharray="5.200 3.330" stroke-dashoffset="2.600"/><g fill="none" stroke="#e2e2e2" stroke-width="1.900" stroke-linejoin="miter"><path d="M30.600 271.200L21.600 257.600 36.500 264 47.600 253.800 47.200 270 36 275"/><circle cx="32.700" cy="273.700" r="2.900"/><path d="M30.200 275.200L22 279M33.400 276.600L29.600 282.800"/></g><path d="M25 324.500L40.500 309.800" stroke="#e2e2e2" stroke-width="6.400" stroke-linecap="round"/><path d="M36.200 313.800L39.600 310.600" stroke="#535353" stroke-width="2" stroke-linecap="round"/><path fill="#e2e2e2" d="M30.6 300.2L31.612000000000002 303.788L35.2 304.8L31.612000000000002 305.812L30.6 309.40000000000003L29.588 305.812L26.0 304.8L29.588 303.788Z"/><path fill="#e2e2e2" d="M48.3 299.8L49.4 303.7L53.3 304.8L49.4 305.90000000000003L48.3 309.8L47.199999999999996 305.90000000000003L43.3 304.8L47.199999999999996 303.7Z"/><path fill="#e2e2e2" d="M47.7 313.0L48.536 315.964L51.5 316.8L48.536 317.636L47.7 320.6L46.864000000000004 317.636L43.900000000000006 316.8L46.864000000000004 315.964Z"/><g fill="none" stroke="#e2e2e2" stroke-width="2.300"><path d="M26.300 346.800V368.200H40.500M45.200 368.200H50.600"/><path d="M17.800 353.200H22.600M26.300 353.200H42.400V375.600"/></g><rect x="22.300" y="396.800" width="26" height="20.600" fill="#6c6c6c" stroke="#e2e2e2" stroke-width="2"/><path d="M22.300 396.800L48.300 417.400M48.300 396.800L22.300 417.400" stroke="#e2e2e2" stroke-width="1.800"/><rect x="20.1" y="394.6" width="4.400" height="4.400" fill="#e2e2e2"/><rect x="46.099999999999994" y="394.6" width="4.400" height="4.400" fill="#e2e2e2"/><rect x="20.1" y="415.2" width="4.400" height="4.400" fill="#e2e2e2"/><rect x="46.099999999999994" y="415.2" width="4.400" height="4.400" fill="#e2e2e2"/><g transform="translate(35.200 452.600) rotate(45)"><rect x="-3.300" y="-3" width="6.600" height="20" rx="3.300" fill="none" stroke="#e2e2e2" stroke-width="1.900"/><rect x="-6.600" y="-6.400" width="13.200" height="4.200" rx="1" fill="#e2e2e2"/><path d="M-3.400 -6h6.800v-7.500a3.400 3.400 0 0 0-6.800 0z" fill="#e2e2e2"/></g><g transform="translate(36.500 498.400) rotate(-38)"><rect x="-14.800" y="-5.500" width="29.600" height="11" rx="2.200" fill="#e2e2e2"/><rect x="-5.400" y="-5.500" width="10.800" height="11" fill="#535353"/><rect x="-4.400" y="-4.500" width="8.800" height="9" fill="#e2e2e2"/><circle cx="-2.6" cy="-2.6" r="0.800" fill="#535353"/><circle cx="-2.6" cy="0" r="0.800" fill="#535353"/><circle cx="-2.6" cy="2.6" r="0.800" fill="#535353"/><circle cx="0" cy="-2.6" r="0.800" fill="#535353"/><circle cx="0" cy="0" r="0.800" fill="#535353"/><circle cx="0" cy="2.6" r="0.800" fill="#535353"/><circle cx="2.6" cy="-2.6" r="0.800" fill="#535353"/><circle cx="2.6" cy="0" r="0.800" fill="#535353"/><circle cx="2.6" cy="2.6" r="0.800" fill="#535353"/></g><path d="M24.500 501.500a7 7 0 1 1 9.500-10.200" fill="none" stroke="#e2e2e2" stroke-width="1.500" stroke-dasharray="1.400 2"/><g transform="translate(23.2 558.6) rotate(-47.6) scale(1.0)" fill="#e2e2e2"><path d="M0 1.600C3 1.800 4 4.500 8 4.300C10 4.200 11 3 11 2.400L11 -2.400C11 -3 10 -4.200 8 -4.300C4 -4.500 2 -1 0 1.600Z"/><path d="M12.300 -2.500L12.300 2.500C16 3.500 20 2.900 34 1C35.200 .6 35.200 -.6 34 -1C20 -2.900 16 -3.500 12.300 -2.500Z"/></g><circle cx="35.100" cy="582.800" r="5.400" fill="#e2e2e2"/><path fill="#e2e2e2" d="M32.200 586h5.800l1.200 7.400h6.200a1.600 1.600 0 0 1 1.600 1.600v6.600h-23.800v-6.600a1.600 1.600 0 0 1 1.600-1.600h6.200z"/><rect x="23.200" y="603.400" width="23.800" height="2" fill="#e2e2e2"/><g transform="translate(25.6 651.4) rotate(-47.6) scale(0.9)" fill="#e2e2e2"><path d="M0 1.600C3 1.800 4 4.500 8 4.300C10 4.200 11 3 11 2.400L11 -2.400C11 -3 10 -4.200 8 -4.300C4 -4.500 2 -1 0 1.600Z"/><path d="M12.300 -2.500L12.300 2.500C16 3.500 20 2.900 34 1C35.200 .6 35.200 -.6 34 -1C20 -2.900 16 -3.500 12.300 -2.500Z"/></g><path d="M21.400 636.400c3.600-5 9.600-6.600 14.600-4.200" fill="none" stroke="#e2e2e2" stroke-width="1.800"/><path d="M17.400 636.600l8.200-3.200-1.400 6.200z" fill="#e2e2e2"/><path d="M45.600 636.500a9 9 0 0 1-6.600 12.400" fill="none" stroke="#e2e2e2" stroke-width="1.500" stroke-dasharray="1.400 2"/><path fill="#e2e2e2" d="M29.600 682.400L40.400 673.900 47.300 681.400 36.500 690.300z"/><path d="M29.600 682.400L21.900 689.400 27.200 695.400 36.500 690.300" fill="none" stroke="#e2e2e2" stroke-width="1.800" stroke-linejoin="round"/><path d="M27 695.900h20.800" stroke="#e2e2e2" stroke-width="1.800"/><path d="M20.300 733.200L31.800 721.400 45.800 731.800 32.200 743.400z" fill="none" stroke="#e2e2e2" stroke-width="2" stroke-linejoin="round"/><path d="M26.800 727c-2-6-.4-10.400 2.200-10.600 2.600-.2 4.400 4.200 5.800 11.200" fill="none" stroke="#e2e2e2" stroke-width="1.700"/><circle cx="35" cy="728.400" r="1.900" fill="#e2e2e2"/><path fill="#e2e2e2" d="M47 731.200c2.200 2.400 3.400 4.200 3.400 5.800a3.400 3.400 0 0 1-6.800 0c0-1.600 1.200-3.400 3.400-5.800z"/><path fill="#e2e2e2" d="M35 762.600c4.800 7 10.200 12.400 10.200 17.600a10.200 10.200 0 0 1-20.400 0c0-5.200 5.400-10.600 10.200-17.600z"/><path fill="#e2e2e2" d="M21.200 823c0-6 5-10.800 12.400-10.800 5.600 0 10 3 14.200 8.400 1.600 2 1.800 3.400 1.200 5l-2.800 8.200-7-2.600c-2.400 1.400-5.400 2-8.200 1.800-5.600-.4-9.800-4.400-9.800-10z"/><circle cx="29.600" cy="823.800" r="4.200" fill="#535353"/><path d="M23 817.500c3-2 7-2.200 10 0" stroke="#535353" stroke-width="1.300" fill="none"/><g transform="translate(36 869) rotate(38)"><path d="M-6.600 -6.800h13.200l1.600 8.600-8.200 15.400-8.200-15.400z" fill="none" stroke="#e2e2e2" stroke-width="1.900" stroke-linejoin="round"/><rect x="-7.200" y="-13" width="14.400" height="5.400" rx="1" fill="#e2e2e2"/><path d="M0 16.500V4" stroke="#e2e2e2" stroke-width="1.500"/><circle cx="0" cy="2.800" r="2.100" fill="#e2e2e2"/></g><path fill="#e2e2e2" d="M24 904.800h23.800v6.400h-1.900l-.7-3.800h-7.300v17.400l3.700.6v1.900h-11.400v-1.900l3.700-.6v-17.400h-7.300l-.7 3.800h-1.900z"/><path fill="#e2e2e2" d="M26 947.400l17.800 17.200h-8.200l5 9.600-3.800 2-5-9.800-5.800 5.600z"/><ellipse cx="34.200" cy="1007" rx="13" ry="11.200" fill="#707070" stroke="#e2e2e2" stroke-width="2"/><path fill="#e2e2e2" d="M27.800 1056.500v-10a1.700 1.700 0 0 1 3.400 0v7.500h.9v-10.600a1.700 1.700 0 0 1 3.400 0v10.400h.9v-9.400a1.700 1.700 0 0 1 3.400 0v9.800h.9v-6.600a1.700 1.700 0 0 1 3.400 0v10.800c0 5.200-3.400 8.600-8.600 8.600-4 0-6.200-1.600-8.400-4.800l-5.400-8.200c-.8-1.400 1-3 2.600-1.800z"/><circle cx="31.200" cy="1096.300" r="9.600" fill="none" stroke="#e2e2e2" stroke-width="2.200"/><path d="M38.400 1103.800l8.800 8.600" stroke="#e2e2e2" stroke-width="3.400" stroke-linecap="round"/><path d="M29.600 1090.500c3.200-.6 6 1 7 3.600" stroke="#e2e2e2" stroke-width="1.500" fill="none"/><circle cx="24" cy="1146.600" r="3.100" fill="#e2e2e2"/><circle cx="34.5" cy="1146.600" r="3.100" fill="#e2e2e2"/><circle cx="45" cy="1146.600" r="3.100" fill="#e2e2e2"/><rect x="14.600" y="1187" width="12" height="11" fill="#dcdcdc"/><rect x="9.400" y="1181.600" width="10" height="10" fill="#0a0a0a" stroke="#d8d8d8" stroke-width="1.300"/><path d="M43.600 1186h8.600v8" fill="none" stroke="#e2e2e2" stroke-width="1.900"/><path fill="#e2e2e2" d="M39.400 1186l5-4.400v8.800zM52.200 1197.800l-4.400-5h8.800z"/><rect x="26" y="1225.600" width="33.400" height="33.200" fill="#ffffff" stroke="#3a3a3a" stroke-width="1"/><rect x="8" y="1207.400" width="34" height="34" fill="#ffffff" stroke="#3a3a3a" stroke-width="1"/><rect x="10.600" y="1210" width="28.800" height="28.800" fill="#6390ce"/><rect x="20.600" y="1281.800" width="28.200" height="20.600" fill="none" stroke="#e2e2e2" stroke-width="1.900"/><circle cx="34.700" cy="1292" r="6.400" fill="none" stroke="#e2e2e2" stroke-width="1.600" stroke-dasharray="1.400 2.620"/><rect x="20.600" y="1332.400" width="19.200" height="15.200" fill="none" stroke="#e2e2e2" stroke-width="1.800"/><rect x="29.800" y="1327.200" width="18.800" height="14.400" fill="#535353" stroke="#e2e2e2" stroke-width="1.800"/><rect x="29.800" y="1326.400" width="18.800" height="2.600" fill="#e2e2e2"/></svg>
<div class="a" style="left:2489px;top:117px;width:3px;height:1303px;background:#383838;"></div>
<div class="a" style="left:2489px;top:103px;width:3px;height:14px;background:#424242;"></div>
<div class="a" style="left:2492px;top:103px;width:66px;height:21px;background:#424242;"></div>
<div class="a" style="left:2492px;top:124px;width:66px;height:1296px;background:#535353;box-shadow:inset 0 1px 0 #5e5e5e"></div>
<div class="a" style="left:1866px;top:1398px;width:623px;height:22px;background:#424242;"></div>
<div class="a" style="left:1866px;top:1410px;width:623px;height:10px;background:#4a4a4a;"></div>
<div class="a" style="left:2278px;top:1410px;width:3px;height:10px;background:#3a3a3a;"></div>
<div class="a" style="left:1860px;top:112px;width:634px;height:1292px;background:transparent;box-shadow:0 0 0 0 #000"></div>
<div class="a" style="left:1866px;top:118px;width:623px;height:1280px;background:#535353;box-shadow:0 0 0 1px #303030,-3px 1px 7px 1px rgba(0,0,0,.45)"></div>
<div class="a" style="left:1866px;top:118px;width:623px;height:3px;background:#3a3a3a;"></div>
<div class="a" style="left:1866px;top:121px;width:623px;height:51px;background:#424242;"></div>
<div class="a" style="left:1866px;top:121px;width:131px;height:53px;background:#535353;"></div>
<div class="a" style="left:1866px;top:172px;width:623px;height:2px;background:#3c3c3c;"></div>
<div class="a" style="left:1866px;top:172px;width:131px;height:2px;background:#535353;"></div>
<div class="a" style="left:1866px;top:174px;width:623px;height:1.5px;background:#696969;"></div>
<div class="a" style="left:1866px;top:499px;width:623px;height:1px;background:#4a4a4a;"></div>
<div class="a" style="left:1866px;top:500px;width:623px;height:1px;background:#5a5a5a;"></div>
<div class="a" style="left:1866px;top:1338px;width:623px;height:1px;background:#474747;"></div>
<div class="a" style="left:1866px;top:1339px;width:623px;height:1px;background:#5a5a5a;"></div>
<div class="t" style="left:1882.80px;top:136.76px;font-size:18.6px;color:#f4f4f4;letter-spacing:0.098px;font-weight:700;">Comments</div>
<div class="a" style="left:1895px;top:204px;width:551.500px;height:196px;background:#454545;border:2.200px solid #4d86d8;border-radius:7px"></div>
<div class="t" style="left:1920.00px;top:225.73px;font-size:20.4px;color:#c8c8c8;letter-spacing:0.343px;font-style:italic;-webkit-text-stroke:0.3px #c8c8c8;">Write a comment...</div>
<div class="t" style="left:2395.50px;top:345.99px;font-size:32.5px;color:#b6b6b6;letter-spacing:-1.492px;-webkit-text-stroke:0.5px #b6b6b6;">@</div>
<div class="t" style="left:2195.00px;top:430.69px;font-size:18.8px;color:#8c8c8c;letter-spacing:-0.330px;font-weight:700;">Cancel</div>
<div class="a" style="left:2318px;top:414px;width:128px;height:56.500px;background:#424242;border-radius:29px"></div>
<div class="t" style="left:2350.00px;top:430.69px;font-size:18.8px;color:#7c7c7c;letter-spacing:-0.041px;font-weight:700;">Submit</div>
<svg class="a" style="left:0;top:0" width="2560" height="1420" viewBox="0 0 2560 1420"><path d="M2420 140.800l5.800 5.900-5.800 5.900M2429 140.800l5.800 5.900-5.800 5.900" stroke="#d2d2d2" stroke-width="2.300" fill="none"/><rect x="2448" y="136.800" width="1.500" height="21" fill="#8c8c8c"/><rect x="2462" y="140.2" width="18" height="1.500" fill="#c2c2c2"/><rect x="2462" y="144.4" width="18" height="1.500" fill="#c2c2c2"/><rect x="2462" y="148.6" width="18" height="1.500" fill="#c2c2c2"/><rect x="2462" y="152.8" width="18" height="1.500" fill="#c2c2c2"/><path d="M2469.5 108.2l-4 4.2 4 4.200M2476.5 108.2l-4 4.2 4 4.200" stroke="#d0d0d0" stroke-width="1.6" fill="none"/><path d="M2540.5 108.2l-4 4.2 4 4.200M2547.5 108.2l-4 4.2 4 4.200" stroke="#d0d0d0" stroke-width="1.6" fill="none"/><path fill="#c4c4c4" d="M1901.68 1375.10C1898.20 1375.10 1896.00 1372.72 1896.00 1369.97C1896.00 1367.22 1898.02 1365.20 1900.58 1364.83C1901.13 1360.62 1904.62 1357.50 1908.83 1357.50C1912.13 1357.50 1914.88 1359.33 1916.17 1362.27C1916.72 1362.08 1917.27 1362.08 1917.82 1362.08C1921.12 1362.08 1923.50 1365.02 1923.50 1368.50C1923.50 1372.17 1920.93 1375.10 1917.45 1375.10Z"/><g opacity=".55" fill="#5d5d5d"><path d="M2376 1359h22l6 9-6 9h-22z"/><path d="M2430 1356h27l-10.500 12v11l-6-3v-8z"/></g><circle cx="2391" cy="1368" r="4.500" fill="none" stroke="#535353" stroke-width="1.600" opacity=".8"/><rect x="2160.0" y="1400" width="1.4" height="8" fill="#555"/><rect x="2163.0" y="1400" width="1.4" height="8" fill="#555"/><rect x="2166.0" y="1400" width="1.4" height="8" fill="#555"/><rect x="2169.0" y="1400" width="1.4" height="8" fill="#555"/><rect x="2172.0" y="1400" width="1.4" height="8" fill="#555"/><rect x="2175.0" y="1400" width="1.4" height="8" fill="#555"/><rect x="2178.0" y="1400" width="1.4" height="8" fill="#555"/><rect x="2181.0" y="1400" width="1.4" height="8" fill="#555"/><rect x="2184.0" y="1400" width="1.4" height="8" fill="#555"/><rect x="2187.0" y="1400" width="1.4" height="8" fill="#555"/><rect x="2190.0" y="1400" width="1.4" height="8" fill="#555"/><rect x="2193.0" y="1400" width="1.4" height="8" fill="#555"/><rect x="2508.50" y="129.3" width="1.400" height="6.400" fill="#464646"/><rect x="2511.45" y="129.3" width="1.400" height="6.400" fill="#464646"/><rect x="2514.40" y="129.3" width="1.400" height="6.400" fill="#464646"/><rect x="2517.35" y="129.3" width="1.400" height="6.400" fill="#464646"/><rect x="2520.30" y="129.3" width="1.400" height="6.400" fill="#464646"/><rect x="2523.25" y="129.3" width="1.400" height="6.400" fill="#464646"/><rect x="2526.20" y="129.3" width="1.400" height="6.400" fill="#464646"/><rect x="2529.15" y="129.3" width="1.400" height="6.400" fill="#464646"/><rect x="2532.10" y="129.3" width="1.400" height="6.400" fill="#464646"/><rect x="2535.05" y="129.3" width="1.400" height="6.400" fill="#464646"/><rect x="2538.00" y="129.3" width="1.400" height="6.400" fill="#464646"/><rect x="2540.95" y="129.3" width="1.400" height="6.400" fill="#464646"/><rect x="2508.50" y="352.3" width="1.400" height="6.400" fill="#464646"/><rect x="2511.45" y="352.3" width="1.400" height="6.400" fill="#464646"/><rect x="2514.40" y="352.3" width="1.400" height="6.400" fill="#464646"/><rect x="2517.35" y="352.3" width="1.400" height="6.400" fill="#464646"/><rect x="2520.30" y="352.3" width="1.400" height="6.400" fill="#464646"/><rect x="2523.25" y="352.3" width="1.400" height="6.400" fill="#464646"/><rect x="2526.20" y="352.3" width="1.400" height="6.400" fill="#464646"/><rect x="2529.15" y="352.3" width="1.400" height="6.400" fill="#464646"/><rect x="2532.10" y="352.3" width="1.400" height="6.400" fill="#464646"/><rect x="2535.05" y="352.3" width="1.400" height="6.400" fill="#464646"/><rect x="2538.00" y="352.3" width="1.400" height="6.400" fill="#464646"/><rect x="2540.95" y="352.3" width="1.400" height="6.400" fill="#464646"/><rect x="2508.50" y="524.5999999999999" width="1.400" height="6.400" fill="#464646"/><rect x="2511.45" y="524.5999999999999" width="1.400" height="6.400" fill="#464646"/><rect x="2514.40" y="524.5999999999999" width="1.400" height="6.400" fill="#464646"/><rect x="2517.35" y="524.5999999999999" width="1.400" height="6.400" fill="#464646"/><rect x="2520.30" y="524.5999999999999" width="1.400" height="6.400" fill="#464646"/><rect x="2523.25" y="524.5999999999999" width="1.400" height="6.400" fill="#464646"/><rect x="2526.20" y="524.5999999999999" width="1.400" height="6.400" fill="#464646"/><rect x="2529.15" y="524.5999999999999" width="1.400" height="6.400" fill="#464646"/><rect x="2532.10" y="524.5999999999999" width="1.400" height="6.400" fill="#464646"/><rect x="2535.05" y="524.5999999999999" width="1.400" height="6.400" fill="#464646"/><rect x="2538.00" y="524.5999999999999" width="1.400" height="6.400" fill="#464646"/><rect x="2540.95" y="524.5999999999999" width="1.400" height="6.400" fill="#464646"/><rect x="2508.50" y="597.4" width="1.400" height="6.400" fill="#464646"/><rect x="2511.45" y="597.4" width="1.400" height="6.400" fill="#464646"/><rect x="2514.40" y="597.4" width="1.400" height="6.400" fill="#464646"/><rect x="2517.35" y="597.4" width="1.400" height="6.400" fill="#464646"/><rect x="2520.30" y="597.4" width="1.400" height="6.400" fill="#464646"/><rect x="2523.25" y="597.4" width="1.400" height="6.400" fill="#464646"/><rect x="2526.20" y="597.4" width="1.400" height="6.400" fill="#464646"/><rect x="2529.15" y="597.4" width="1.400" height="6.400" fill="#464646"/><rect x="2532.10" y="597.4" width="1.400" height="6.400" fill="#464646"/><rect x="2535.05" y="597.4" width="1.400" height="6.400" fill="#464646"/><rect x="2538.00" y="597.4" width="1.400" height="6.400" fill="#464646"/><rect x="2540.95" y="597.4" width="1.400" height="6.400" fill="#464646"/><rect x="2492" y="344.5" width="66" height="1.600" fill="#3c3c3c"/><rect x="2492" y="346.1" width="66" height="1" fill="#5c5c5c"/><rect x="2492" y="516.7" width="66" height="1.600" fill="#3c3c3c"/><rect x="2492" y="518.3000000000001" width="66" height="1" fill="#5c5c5c"/><rect x="2492" y="589.5" width="66" height="1.600" fill="#3c3c3c"/><rect x="2492" y="591.1" width="66" height="1" fill="#5c5c5c"/><rect x="2492" y="761.5" width="66" height="1.600" fill="#3c3c3c"/><rect x="2492" y="763.1" width="66" height="1" fill="#5c5c5c"/><path fill="#e2e2e2" d="M2526.500 153.200c8.600 0 15 4.600 15 10.600 0 6.200-7 11.800-16.600 11.800-4.400 0-6-2-5.600-4.200.4-2-.6-3-3-3-4 0-7-1.800-7-5 0-5.600 7.400-10.200 17.200-10.200z"/><circle cx="2516.2" cy="163.8" r="2.5" fill="#535353"/><circle cx="2522.4" cy="170" r="2.4" fill="#535353"/><circle cx="2530.6" cy="169.4" r="2.4" fill="#535353"/><circle cx="2536.2" cy="164" r="2.4" fill="#535353"/><circle cx="2531.4" cy="158" r="2.2" fill="#535353"/><rect x="2511.800" y="201.800" width="28.800" height="23" fill="#e2e2e2"/><rect x="2513.6" y="203.6" width="7" height="5.200" fill="#b0b0b0"/><rect x="2522.8" y="203.6" width="7" height="5.200" fill="#8c8c8c"/><rect x="2532.0" y="203.6" width="7" height="5.200" fill="#5c5c5c"/><rect x="2513.6" y="210.8" width="7" height="5.200" fill="#8c8c8c"/><rect x="2522.8" y="210.8" width="7" height="5.200" fill="#5a5a5a"/><rect x="2532.0" y="210.8" width="7" height="5.200" fill="#444"/><rect x="2513.6" y="218.0" width="7" height="5.200" fill="#3c3c3c"/><rect x="2522.8" y="218.0" width="7" height="5.200" fill="#333"/><rect x="2532.0" y="218.0" width="7" height="5.200" fill="#2a2a2a"/><defs><linearGradient id="gr1" x1="0" x2="1" y1="0" y2="0"><stop offset="0" stop-color="#444"/><stop offset="1" stop-color="#e8e8e8"/></linearGradient></defs><rect x="2512.800" y="252.600" width="26.800" height="20.800" fill="url(#gr1)" stroke="#e2e2e2" stroke-width="2"/><rect x="2511.800" y="301" width="28.800" height="23.200" fill="#e2e2e2"/><rect x="2516.5" y="303" width="2" height="6" fill="#535353"/><rect x="2523" y="303" width="2" height="4" fill="#535353"/><rect x="2529.5" y="303" width="2" height="6" fill="#535353"/><rect x="2536" y="303" width="2" height="4" fill="#535353"/><rect x="2513.5" y="310.5" width="5" height="2" fill="#535353"/><rect x="2519.5" y="308" width="2" height="9" fill="#535353"/><rect x="2524" y="312.8" width="5" height="2" fill="#535353"/><rect x="2531.5" y="307" width="2" height="10" fill="#535353"/><rect x="2535.5" y="310.5" width="5" height="2" fill="#535353"/><rect x="2516.5" y="318" width="2" height="6" fill="#535353"/><rect x="2523" y="319.5" width="2" height="4.7" fill="#535353"/><rect x="2529.5" y="319" width="2" height="5" fill="#535353"/><rect x="2536" y="318" width="2" height="6" fill="#535353"/><g stroke="#e2e2e2" stroke-width="1.700" fill="#535353"><path d="M2511.500 377.800h28M2511.500 386.600h28M2511.500 395.400h28"/><circle cx="2519.200" cy="377.800" r="3.200"/><circle cx="2532" cy="386.600" r="3.200"/><circle cx="2522.400" cy="395.400" r="3.200"/></g><circle cx="2525" cy="436.800" r="11.800" fill="none" stroke="#e2e2e2" stroke-width="2.400"/><path fill="#e2e2e2" d="M2516.700 445.100a11.800 11.800 0 0 0 16.600-16.600z"/><rect x="2513.600" y="471.600" width="21" height="24" rx="1.500" fill="none" stroke="#bdbdbd" stroke-width="1.600"/><rect x="2516.600" y="474.800" width="22" height="24" rx="1.500" fill="#535353" stroke="#e2e2e2" stroke-width="1.800"/><path fill="#e2e2e2" d="M2528.800 475h7v11.500l-3.500-3-3.500 3z"/><rect x="2500.800" y="539.800" width="49" height="40" rx="3" fill="#2d2d2d" stroke="#616161" stroke-width="1.300"/><path fill="#e2e2e2" d="M2514 546.500h23.500a2 2 0 0 1 2 2v12.500a2 2 0 0 1-2 2h-12l-7 7.500v-7.500h-4.500a2 2 0 0 1-2-2v-12.500a2 2 0 0 1 2-2z"/><path fill="#e2e2e2" d="M2525.200 617.200l14.600 8-14.600 8-14.600-8z"/><path fill="#c9c9c9" d="M2514.800 630.400l-4.200 2.400 14.600 8.200 14.600-8.200-4.200-2.400-10.400 5.800z"/><circle cx="2525" cy="675.400" r="8.200" fill="#8f8f8f"/><circle cx="2519.600" cy="685.400" r="8.200" fill="#d8d8d8"/><circle cx="2530.400" cy="685.400" r="8.200" fill="#b4b4b4"/><path d="M2525 679.200c2.400 1.200 3.800 3.400 3.800 6.200h-7.600c0-2.800 1.400-5 3.800-6.200z" fill="#4a4a4a"/><g fill="none" stroke="#e2e2e2" stroke-width="1.600"><path d="M2509 722h34M2513.400 738.500c0-9 4-15.500 12-16.500 8 1 12 7.500 12 16.500"/></g><g fill="#e2e2e2"><rect x="2506.600" y="719" width="6" height="6"/><rect x="2538.400" y="719" width="6" height="6"/><rect x="2523" y="719.600" width="4.800" height="4.800"/></g><g fill="#535353" stroke="#e2e2e2" stroke-width="1.500"><rect x="2510.600" y="738" width="5.400" height="5.400"/><rect x="2534.200" y="738" width="5.400" height="5.400"/></g></svg>
<div class="a" style="left:1505.500px;top:505.800px;width:871px;height:136.200px;background:#2a63ad;border-radius:42px"></div>
<div class="t" style="left:1505.500px;width:871px;text-align:center;top:523.4px;font-family:'Anuphan','IBM Plex Sans Thai','Noto Sans Thai','Kanit','Prompt','Sarabun','Liberation Sans','Noto Sans CJK SC',sans-serif;font-weight:700;font-size:52px;color:#fff;letter-spacing:-0.33px;padding-left:1.6px">สามารถคอมเมนต์งานที่แชร์ร่วมกัน</div>
<div class="t" style="left:1505.500px;width:871px;text-align:center;top:579px;font-family:'Anuphan','IBM Plex Sans Thai','Noto Sans Thai','Kanit','Prompt','Sarabun','Liberation Sans','Noto Sans CJK SC',sans-serif;font-weight:700;font-size:52px;color:#fff;letter-spacing:-0.07px;padding-left:1px">ผ่าน Photoshop ไว้ได้เลย</div>
</div></body></html>
